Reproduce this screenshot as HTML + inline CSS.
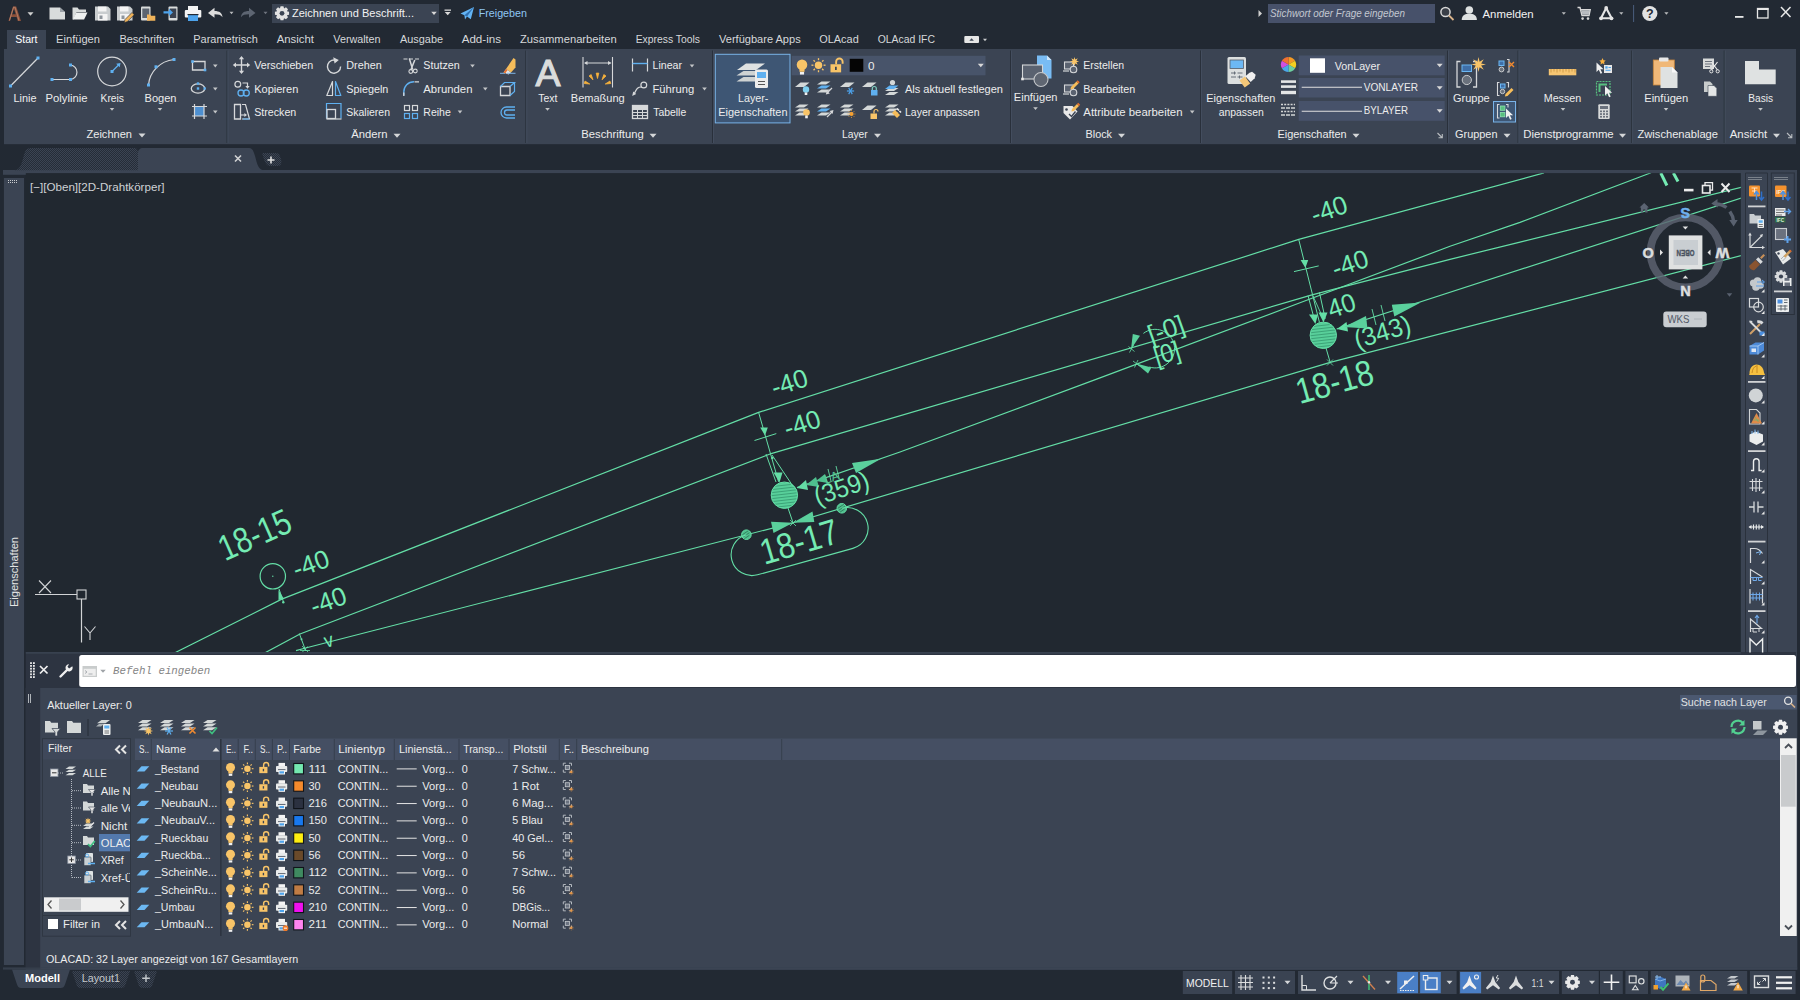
<!DOCTYPE html>
<html lang="de"><head><meta charset="utf-8"><title>AutoCAD</title>
<style>html,body{margin:0;padding:0;background:#222933;overflow:hidden}svg{display:block}text{font-family:"Liberation Sans",sans-serif;white-space:pre}</style>
</head><body>
<svg width="1800" height="1000" viewBox="0 0 1800 1000">
<defs><pattern id="chk" width="2" height="2" patternUnits="userSpaceOnUse"><rect width="2" height="2" fill="#252c37"/><rect width="1" height="1" fill="#3b4453"/><rect x="1" y="1" width="1" height="1" fill="#3b4453"/></pattern></defs>
<rect x="0.00" y="0.00" width="1800.00" height="1000.00" fill="#222933" />
<rect x="4.00" y="49.00" width="1792.00" height="95.20" fill="#3b4453" />
<rect x="7.00" y="30.00" width="39.00" height="20.00" fill="#3b4453" />
<rect x="3.00" y="170.00" width="1794.00" height="3.30" fill="#3b4453" />
<rect x="3.00" y="170.00" width="23.00" height="4.80" fill="#3b4453" />
<rect x="3.90" y="178.00" width="20.10" height="787.00" fill="#3b4453" />
<rect x="25.80" y="173.30" width="1715.00" height="478.70" fill="#212830" />
<rect x="1740.80" y="170.00" width="56.20" height="518.00" fill="#3b4453" />
<rect x="25.80" y="652.00" width="1771.20" height="36.00" fill="#2d3441" />
<rect x="25.80" y="652.00" width="1715.00" height="1.80" fill="#38414f" />
<rect x="1796.00" y="652.00" width="1.00" height="36.00" fill="#3b4453" />
<rect x="25.80" y="688.00" width="1771.50" height="281.70" fill="#3b4453" />
<rect x="25.80" y="688.00" width="14.40" height="280.20" fill="#2d3441" />
<rect x="3.00" y="967.40" width="1794.00" height="2.20" fill="#353e4b" />
<rect x="40.20" y="967.40" width="1757.00" height="2.20" fill="#3b4453" />
<path d="M8.5 21 L13 6.5 h3.2 L21 21 h-3.2 l-1.2-4 h-5.6 l-1.3 4z M12 14.3h3.7l-1.8-5.8z" fill="#8a4f3a" />
<path d="M9.5 20.5 L13.6 7.2 h1.4 L19 20.5" fill="none" stroke="#b07a62" stroke-width="1.1" />
<path d="M27.50 12.25h6l-3.00 3.5z" fill="#d0d0d0" />
<path d="M49.5 7.5h10.5l5 4.5v7.5h-15.5z" fill="#d9dcdc" />
<path d="M60 7.5v4.5h5z" fill="#9aa0a6" />
<path d="M72.5 19.5v-12h5l1.5 2h7v2.5h-9.5l-3 7.5z" fill="#d9dcdc" />
<path d="M72.8 19.5l3.4-7h11.3l-3.4 7z" fill="#eef0f0" />
<path d="M95 6.5h13l2.5 2.5v11.5h-15.5z" fill="#c9cdcf" />
<rect x="98.00" y="6.50" width="8.50" height="5.00" fill="#f4f4f4" />
<rect x="98.00" y="14.00" width="9.50" height="6.50" fill="#f4f4f4" />
<rect x="99.50" y="15.50" width="3.00" height="3.50" fill="#8d949b" />
<path d="M117 6.5h13l2.5 2.5v11.5h-15.5z" fill="#c9cdcf" />
<rect x="120.00" y="6.50" width="8.50" height="5.00" fill="#f4f4f4" />
<rect x="120.00" y="14.00" width="9.50" height="6.50" fill="#f4f4f4" />
<rect x="121.50" y="15.50" width="3.00" height="3.50" fill="#8d949b" />
<path d="M125 19.5l7-7 2.2 2.2-7 7-3 .8z" fill="#f0b35a" stroke="#222933" stroke-width="0.6" />
<rect x="141.00" y="6.50" width="9.50" height="14.00" fill="#d9dcdc" rx="1" />
<rect x="142.30" y="8.50" width="7.00" height="9.50" fill="#5c6470" />
<path d="M147 14.5h3l1 1.2h4.3v5h-8.3z" fill="#f0b35a" />
<rect x="168.50" y="6.50" width="9.00" height="14.00" fill="#d9dcdc" rx="1" />
<rect x="169.80" y="8.50" width="6.50" height="9.50" fill="#3a4250" />
<path d="M163.5 11.2h5.5v-2.4l4 3.6-4 3.6v-2.4h-5.5z" fill="#4da3ec" />
<rect x="188.00" y="6.00" width="10.00" height="4.50" fill="#f4f4f4" />
<rect x="184.80" y="10.00" width="16.50" height="7.50" fill="#f4f4f4" rx="1" />
<rect x="188.00" y="14.50" width="10.00" height="6.50" fill="#4da3ec" />
<rect x="187.50" y="14.00" width="11.00" height="1.20" fill="#222933" />
<path d="M208 13l6.5-5.2v3.2c5 0 7.8 2 8 6.3-1.6-2.4-4-3-8-3v3.5z" fill="#dcdcdc" />
<path d="M229.50 11.75h4l-2.00 2.5z" fill="#b8babc" />
<path d="M255.5 13l-6.5-5.2v3.2c-5 0-7.8 2-8 6.3 1.6-2.4 4-3 8-3v3.5z" fill="#5d6572" />
<path d="M263.50 11.75h4l-2.00 2.5z" fill="#70767f" />
<rect x="272.00" y="4.00" width="167.00" height="19.00" fill="#3b4453" />
<path d="M289.06 11.87 L289.06 14.73 L286.93 15.33 L286.92 15.35 L288.00 17.28 L285.98 19.30 L284.05 18.22 L284.03 18.23 L283.43 20.36 L280.57 20.36 L279.97 18.23 L279.95 18.22 L278.02 19.30 L276.00 17.28 L277.08 15.35 L277.07 15.33 L274.94 14.73 L274.94 11.87 L277.07 11.27 L277.08 11.25 L276.00 9.32 L278.02 7.30 L279.95 8.38 L279.97 8.37 L280.57 6.24 L283.43 6.24 L284.03 8.37 L284.05 8.38 L285.98 7.30 L288.00 9.32 L286.92 11.25 L286.93 11.27z" fill="#e2e2e2" />
<circle cx="282.00" cy="13.30" r="2.38" fill="#3b4453" />
<text x="292.00" y="17.30" font-size="11.8" fill="#f2f2f2" textLength="122.00" lengthAdjust="spacingAndGlyphs" >Zeichnen und Beschrift...</text>
<path d="M431.25 11.70h5.5l-2.75 3.2z" fill="#d8d8d8" />
<rect x="444.50" y="9.50" width="6.50" height="1.30" fill="#d8d8d8" />
<path d="M444.70 11.90h6l-3.00 3.4z" fill="#d8d8d8" />
<path d="M460.5 13.5L474 7l-3.2 12.2-3.8-2.6-2 2.9-.6-4.3z" fill="#63b4f4" />
<path d="M464.4 15.2L474 7l-7 9.6" fill="#2f6fb0" />
<text x="478.70" y="17.30" font-size="11.8" fill="#8fc6f4" textLength="48.30" lengthAdjust="spacingAndGlyphs" >Freigeben</text>
<path d="M1258.5 10l3.5 3.5-3.5 3.5z" fill="#d0d0d0" />
<rect x="1268.00" y="4.00" width="167.00" height="19.00" fill="#47516a" />
<text x="1270.00" y="17.20" font-size="11.3" fill="#c3c8d0" font-style="italic" textLength="135.00" lengthAdjust="spacingAndGlyphs" >Stichwort oder Frage eingeben</text>
<circle cx="1445.50" cy="12.00" r="4.60" fill="#3a3f48" stroke="#d8d8d8" stroke-width="1.5" />
<line x1="1449.00" y1="15.50" x2="1453.50" y2="20.00" stroke="#d9b38a" stroke-width="1.8" />
<circle cx="1469.30" cy="10.00" r="3.80" fill="#dfe2e2" />
<path d="M1461.7 20c0-4.5 3-6.3 7.6-6.3s7.6 1.8 7.6 6.3z" fill="#dfe2e2" />
<text x="1482.50" y="17.50" font-size="11.8" fill="#f2f2f2" textLength="51.20" lengthAdjust="spacingAndGlyphs" >Anmelden</text>
<path d="M1561.70 12.20h4.2l-2.10 2.6z" fill="#b8babc" />
<path d="M1577.5 7.5h2.5l2 8h7l1.2-5.8h-9" fill="none" stroke="#d8d8d8" stroke-width="1.4" />
<circle cx="1582.60" cy="18.60" r="1.30" fill="#d8d8d8" />
<circle cx="1588.00" cy="18.60" r="1.30" fill="#d8d8d8" />
<path d="M1581.3 10.2h8.4l-1 4.6h-6.3z" fill="#b9bcc0" />
<path d="M1606.2 8l-5.2 10.3h10.6z" fill="none" stroke="#e4e4e4" stroke-width="2.1" stroke-linejoin="round"/>
<circle cx="1606.20" cy="8.00" r="1.90" fill="#e4e4e4" />
<circle cx="1601.00" cy="18.30" r="1.90" fill="#e4e4e4" />
<circle cx="1611.50" cy="18.30" r="1.90" fill="#e4e4e4" />
<path d="M1619.20 12.20h4.2l-2.10 2.6z" fill="#b8babc" />
<line x1="1633.60" y1="5.00" x2="1633.60" y2="22.00" stroke="#4a5d7e" stroke-width="1" />
<circle cx="1649.80" cy="13.50" r="7.60" fill="#e2e2e2" />
<text x="1649.80" y="18.20" font-size="12.5" fill="#222933" text-anchor="middle" font-weight="bold" >?</text>
<path d="M1664.30 12.20h4.2l-2.10 2.6z" fill="#b8babc" />
<rect x="1735.00" y="16.00" width="8.50" height="1.80" fill="#e8e8e8" />
<rect x="1757.50" y="8.50" width="10.50" height="9.50" fill="none" stroke="#e8e8e8" stroke-width="1.3" />
<rect x="1757.00" y="8.00" width="11.50" height="2.00" fill="#e8e8e8" />
<line x1="1781.00" y1="7.00" x2="1790.50" y2="17.00" stroke="#e8e8e8" stroke-width="1.5" />
<line x1="1790.50" y1="7.00" x2="1781.00" y2="17.00" stroke="#e8e8e8" stroke-width="1.5" />
<text x="15.30" y="43.20" font-size="11.7" fill="#ffffff" textLength="22.20" lengthAdjust="spacingAndGlyphs" >Start</text>
<text x="56.10" y="43.20" font-size="11.7" fill="#d6d8da" textLength="43.90" lengthAdjust="spacingAndGlyphs" >Einfügen</text>
<text x="119.40" y="43.20" font-size="11.7" fill="#d6d8da" textLength="55.00" lengthAdjust="spacingAndGlyphs" >Beschriften</text>
<text x="193.30" y="43.20" font-size="11.7" fill="#d6d8da" textLength="64.50" lengthAdjust="spacingAndGlyphs" >Parametrisch</text>
<text x="276.70" y="43.20" font-size="11.7" fill="#d6d8da" textLength="37.20" lengthAdjust="spacingAndGlyphs" >Ansicht</text>
<text x="333.30" y="43.20" font-size="11.7" fill="#d6d8da" textLength="47.30" lengthAdjust="spacingAndGlyphs" >Verwalten</text>
<text x="400.00" y="43.20" font-size="11.7" fill="#d6d8da" textLength="43.00" lengthAdjust="spacingAndGlyphs" >Ausgabe</text>
<text x="461.70" y="43.20" font-size="11.7" fill="#d6d8da" textLength="39.30" lengthAdjust="spacingAndGlyphs" >Add-ins</text>
<text x="520.00" y="43.20" font-size="11.7" fill="#d6d8da" textLength="96.70" lengthAdjust="spacingAndGlyphs" >Zusammenarbeiten</text>
<text x="635.70" y="43.20" font-size="11.7" fill="#d6d8da" textLength="64.30" lengthAdjust="spacingAndGlyphs" >Express Tools</text>
<text x="719.00" y="43.20" font-size="11.7" fill="#d6d8da" textLength="81.70" lengthAdjust="spacingAndGlyphs" >Verfügbare Apps</text>
<text x="819.30" y="43.20" font-size="11.7" fill="#d6d8da" textLength="39.40" lengthAdjust="spacingAndGlyphs" >OLAcad</text>
<text x="877.70" y="43.20" font-size="11.7" fill="#d6d8da" textLength="57.30" lengthAdjust="spacingAndGlyphs" >OLAcad IFC</text>
<rect x="964.30" y="36.00" width="14.70" height="7.00" fill="#e6e6e6" rx="1" />
<path d="M969.35 40.80h4.5l-2.25 -2.6z" fill="#3b4453" />
<path d="M983.00 38.75h4l-2.00 2.5z" fill="#c8cacc" />
<line x1="227.00" y1="50.50" x2="227.00" y2="143.00" stroke="#29303b" stroke-width="1" />
<line x1="228.00" y1="50.50" x2="228.00" y2="143.00" stroke="#434d5e" stroke-width="1" />
<line x1="525.80" y1="50.50" x2="525.80" y2="143.00" stroke="#29303b" stroke-width="1" />
<line x1="526.80" y1="50.50" x2="526.80" y2="143.00" stroke="#434d5e" stroke-width="1" />
<line x1="712.50" y1="50.50" x2="712.50" y2="143.00" stroke="#29303b" stroke-width="1" />
<line x1="713.50" y1="50.50" x2="713.50" y2="143.00" stroke="#434d5e" stroke-width="1" />
<line x1="1010.50" y1="50.50" x2="1010.50" y2="143.00" stroke="#29303b" stroke-width="1" />
<line x1="1011.50" y1="50.50" x2="1011.50" y2="143.00" stroke="#434d5e" stroke-width="1" />
<line x1="1200.50" y1="50.50" x2="1200.50" y2="143.00" stroke="#29303b" stroke-width="1" />
<line x1="1201.50" y1="50.50" x2="1201.50" y2="143.00" stroke="#434d5e" stroke-width="1" />
<line x1="1447.50" y1="50.50" x2="1447.50" y2="143.00" stroke="#29303b" stroke-width="1" />
<line x1="1448.50" y1="50.50" x2="1448.50" y2="143.00" stroke="#434d5e" stroke-width="1" />
<line x1="1518.00" y1="50.50" x2="1518.00" y2="143.00" stroke="#29303b" stroke-width="1" />
<line x1="1519.00" y1="50.50" x2="1519.00" y2="143.00" stroke="#434d5e" stroke-width="1" />
<line x1="1631.70" y1="50.50" x2="1631.70" y2="143.00" stroke="#29303b" stroke-width="1" />
<line x1="1632.70" y1="50.50" x2="1632.70" y2="143.00" stroke="#434d5e" stroke-width="1" />
<line x1="1724.20" y1="50.50" x2="1724.20" y2="143.00" stroke="#29303b" stroke-width="1" />
<line x1="1725.20" y1="50.50" x2="1725.20" y2="143.00" stroke="#434d5e" stroke-width="1" />
<line x1="10.50" y1="86.00" x2="38.00" y2="58.00" stroke="#d6d8da" stroke-width="1.2" />
<rect x="9.00" y="84.50" width="3.00" height="3.00" fill="#5fb0f0" />
<rect x="36.50" y="56.50" width="3.00" height="3.00" fill="#5fb0f0" />
<path d="M52 79.5H70.5A7.3 7.3 0 0 0 70.5 65" fill="none" stroke="#d6d8da" stroke-width="1.2" />
<rect x="50.50" y="78.00" width="3.00" height="3.00" fill="#5fb0f0" />
<rect x="69.00" y="78.00" width="3.00" height="3.00" fill="#5fb0f0" />
<rect x="69.00" y="63.50" width="3.00" height="3.00" fill="#5fb0f0" />
<circle cx="112.00" cy="71.50" r="14.30" fill="none" stroke="#d6d8da" stroke-width="1.2" />
<line x1="112.00" y1="71.50" x2="119.00" y2="64.50" stroke="#5fb0f0" stroke-width="1.2" />
<path d="M120.5 63l-4.3.8 3.5 3.5z" fill="#5fb0f0" />
<rect x="110.50" y="70.00" width="3.00" height="3.00" fill="#5fb0f0" />
<path d="M148.5 85C149.5 72 160 61 174 59.5" fill="none" stroke="#d6d8da" stroke-width="1.2" />
<rect x="147.00" y="83.50" width="3.00" height="3.00" fill="#5fb0f0" />
<rect x="154.50" y="65.30" width="3.00" height="3.00" fill="#5fb0f0" />
<rect x="172.50" y="58.00" width="3.00" height="3.00" fill="#5fb0f0" />
<text x="13.50" y="101.60" font-size="11.7" fill="#ececec" textLength="23.00" lengthAdjust="spacingAndGlyphs" >Linie</text>
<text x="45.50" y="101.60" font-size="11.7" fill="#ececec" textLength="42.00" lengthAdjust="spacingAndGlyphs" >Polylinie</text>
<text x="100.50" y="101.60" font-size="11.7" fill="#ececec" textLength="23.50" lengthAdjust="spacingAndGlyphs" >Kreis</text>
<text x="144.50" y="101.60" font-size="11.7" fill="#ececec" textLength="32.00" lengthAdjust="spacingAndGlyphs" >Bogen</text>
<path d="M109.70 107.90h4.6l-2.30 2.8z" fill="#c4c6c8" />
<path d="M157.70 107.90h4.6l-2.30 2.8z" fill="#c4c6c8" />
<path d="M192.5 61.5h12.5v8.5h-12.5z" fill="none" stroke="#d6d8da" stroke-width="1.3" />
<rect x="191.20" y="60.20" width="2.60" height="2.60" fill="#5fb0f0" />
<rect x="203.70" y="68.70" width="2.60" height="2.60" fill="#5fb0f0" />
<path d="M213.00 64.60h4.6l-2.30 2.8z" fill="#c4c6c8" />
<ellipse cx="198" cy="88.5" rx="6.7" ry="4.6" fill="none" stroke="#d6d8da" stroke-width="1.3"/>
<rect x="196.80" y="87.30" width="2.40" height="2.40" fill="#5fb0f0" />
<rect x="196.80" y="82.30" width="2.40" height="2.40" fill="#5fb0f0" />
<rect x="203.50" y="87.30" width="2.40" height="2.40" fill="#5fb0f0" />
<path d="M213.00 87.60h4.6l-2.30 2.8z" fill="#c4c6c8" />
<rect x="194.50" y="106.50" width="9.50" height="9.50" fill="#4d8fd0" />
<path d="M192 106.5h15M192 116h15M194.5 104v15M204 104v15" fill="none" stroke="#d6d8da" stroke-width="1.2" />
<path d="M213.00 110.60h4.6l-2.30 2.8z" fill="#c4c6c8" />
<text x="86.50" y="138.30" font-size="11.7" fill="#ececec" textLength="45.50" lengthAdjust="spacingAndGlyphs" >Zeichnen</text>
<path d="M138.50 133.60h7l-3.50 4z" fill="#d4d6d8" />
<path d="M241.5 57.5v15M234 65h15" fill="none" stroke="#d6d8da" stroke-width="1.4" />
<path d="M241.5 56l2.6 3.2h-5.2zM241.5 74l2.6-3.2h-5.2zM232.8 65l3.2-2.6v5.2zM250.2 65l-3.2-2.6v5.2z" fill="#d6d8da" />
<text x="254.20" y="69.30" font-size="11.7" fill="#ececec" textLength="59.10" lengthAdjust="spacingAndGlyphs" >Verschieben</text>
<circle cx="237.80" cy="84.30" r="2.90" fill="none" stroke="#d6d8da" stroke-width="1.2" />
<path d="M242.5 83h5v3.5" fill="none" stroke="#d6d8da" stroke-width="1.2" />
<path d="M247.5 88.8l-2.2-2.8h4.4z" fill="#d6d8da" />
<circle cx="241.00" cy="93.00" r="3.00" fill="none" stroke="#5fb0f0" stroke-width="1.3" />
<circle cx="246.30" cy="93.00" r="3.00" fill="none" stroke="#5fb0f0" stroke-width="1.3" />
<text x="254.20" y="92.50" font-size="11.7" fill="#ececec" textLength="44.10" lengthAdjust="spacingAndGlyphs" >Kopieren</text>
<path d="M234.5 104.5h6v14.5h-6z" fill="none" stroke="#d6d8da" stroke-width="1.3" />
<path d="M242 104.5h3.5l4 14.5h-7.5" fill="none" stroke="#d6d8da" stroke-width="1.2" />
<path d="M240.5 115h5" fill="none" stroke="#d6d8da" stroke-width="1.1" />
<path d="M247 115l-2.6-1.9v3.8z" fill="#d6d8da" />
<path d="M243 119h6.5" fill="none" stroke="#5fb0f0" stroke-width="1.1" />
<text x="254.20" y="115.60" font-size="11.7" fill="#ececec" textLength="42.10" lengthAdjust="spacingAndGlyphs" >Strecken</text>
<path d="M337.2 60.8A6.6 6.6 0 1 0 340.6 66.5" fill="none" stroke="#d6d8da" stroke-width="1.4" />
<path d="M333.2 57.3l5.6 2.6-4.2 3.6z" fill="#d6d8da" />
<text x="346.30" y="69.30" font-size="11.7" fill="#ececec" textLength="35.40" lengthAdjust="spacingAndGlyphs" >Drehen</text>
<path d="M332.5 81.5v14l-5.7 0z" fill="none" stroke="#d6d8da" stroke-width="1.2" stroke-linejoin="round"/>
<path d="M335.5 81.5v14l5.3 0z" fill="none" stroke="#5fb0f0" stroke-width="1.2" stroke-linejoin="round"/>
<text x="346.30" y="92.50" font-size="11.7" fill="#ececec" textLength="42.00" lengthAdjust="spacingAndGlyphs" >Spiegeln</text>
<path d="M326.5 118.5v-15h14.5v15" fill="none" stroke="#5fb0f0" stroke-width="1.2" />
<rect x="327.00" y="109.50" width="8.50" height="9.00" fill="none" stroke="#d6d8da" stroke-width="1.3" />
<path d="M326.5 119h15" fill="none" stroke="#d6d8da" stroke-width="1.2" />
<text x="346.30" y="115.60" font-size="11.7" fill="#ececec" textLength="43.70" lengthAdjust="spacingAndGlyphs" >Skalieren</text>
<path d="M403.5 59h4M409 59h4M415 59h4" fill="none" stroke="#d6d8da" stroke-width="1.2" />
<path d="M409.3 58.5l3.4 11M414.8 60l-4 10" fill="none" stroke="#d6d8da" stroke-width="1.5" />
<circle cx="410.80" cy="71.50" r="1.90" fill="none" stroke="#d6d8da" stroke-width="1.1" />
<circle cx="415.30" cy="71.00" r="1.90" fill="none" stroke="#d6d8da" stroke-width="1.1" />
<text x="423.30" y="69.30" font-size="11.7" fill="#ececec" textLength="36.40" lengthAdjust="spacingAndGlyphs" >Stutzen</text>
<path d="M470.20 64.60h4.6l-2.30 2.8z" fill="#c4c6c8" />
<path d="M403.8 95.5V92C403.8 86 408 81.8 414 81.8" fill="none" stroke="#5fb0f0" stroke-width="1.4" />
<path d="M414.5 81.8h4.5M403.8 92.5v3.5" fill="none" stroke="#d6d8da" stroke-width="1.3" />
<text x="423.30" y="92.50" font-size="11.7" fill="#ececec" textLength="49.20" lengthAdjust="spacingAndGlyphs" >Abrunden</text>
<path d="M483.00 87.60h4.6l-2.30 2.8z" fill="#c4c6c8" />
<rect x="404.50" y="105.50" width="5.00" height="5.00" fill="none" stroke="#d6d8da" stroke-width="1.2" />
<rect x="412.50" y="105.50" width="5.00" height="5.00" fill="none" stroke="#d6d8da" stroke-width="1.2" />
<rect x="404.50" y="113.50" width="5.00" height="5.00" fill="none" stroke="#5fb0f0" stroke-width="1.2" />
<rect x="412.50" y="113.50" width="5.00" height="5.00" fill="none" stroke="#5fb0f0" stroke-width="1.2" />
<text x="423.30" y="115.60" font-size="11.7" fill="#ececec" textLength="27.50" lengthAdjust="spacingAndGlyphs" >Reihe</text>
<path d="M457.70 110.60h4.6l-2.30 2.8z" fill="#c4c6c8" />
<path d="M506 69l7.5-11 2 1.5v8l-4.5 5z" fill="#f6bd5a" />
<path d="M503.5 72.5l2.5-3.5 5 3.5-2.5 2z" fill="#e8e8e8" />
<path d="M500 73.3h5M507 73.3h8.5" fill="none" stroke="#7fb4e4" stroke-width="1" />
<path d="M503.5 72.5l2.5-3.5 1.6 1.1-2.5 3.5z" fill="#e8702a" />
<path d="M500.5 86.5h9.5v9h-9.5z" fill="none" stroke="#d6d8da" stroke-width="1.3" />
<path d="M500.5 86.5l4-4h10l-4.5 4M514.5 82.5v9l-4.5 4" fill="none" stroke="#5fb0f0" stroke-width="1.2" />
<path d="M515 107h-8.5a5.5 5.5 0 0 0 0 11h8.5" fill="none" stroke="#5fb0f0" stroke-width="1.3" />
<path d="M515 110h-8a2.5 2.5 0 0 0 0 5h8" fill="none" stroke="#5fb0f0" stroke-width="1.3" />
<text x="351.30" y="138.30" font-size="11.7" fill="#ececec" textLength="36.20" lengthAdjust="spacingAndGlyphs" >Ändern</text>
<path d="M393.50 133.70h7l-3.50 4z" fill="#d4d6d8" />
<text x="535.40" y="85.80" font-size="37.5" fill="#dadcdc" textLength="25.00" lengthAdjust="spacingAndGlyphs" stroke="#dadcdc" stroke-width="1.1">A</text>
<text x="538.30" y="101.60" font-size="11.7" fill="#ececec" textLength="19.20" lengthAdjust="spacingAndGlyphs" >Text</text>
<path d="M545.20 107.90h4.6l-2.30 2.8z" fill="#c4c6c8" />
<path d="M583 57v30.5M612.5 57v30.5" fill="none" stroke="#d6d8da" stroke-width="1.1" />
<path d="M585 63h25.5" fill="none" stroke="#d6d8da" stroke-width="1" />
<path d="M584 63l3.5-2v4zM611.5 63l-3.5-2v4z" fill="#d6d8da" />
<path d="M597.50 78.50L596.20 73.10L598.80 73.10z" fill="#f6b13c" stroke="#f6b13c" stroke-width="0.8" />
<path d="M601.97 79.82L603.82 74.59L606.00 76.00z" fill="#f6b13c" stroke="#f6b13c" stroke-width="0.8" />
<path d="M593.03 79.82L589.00 76.00L591.18 74.59z" fill="#f6b13c" stroke="#f6b13c" stroke-width="0.8" />
<path d="M605.25 84.03L609.94 81.04L610.78 83.50z" fill="#f6b13c" stroke="#f6b13c" stroke-width="0.8" />
<path d="M589.75 84.03L584.22 83.50L585.06 81.04z" fill="#f6b13c" stroke="#f6b13c" stroke-width="0.8" />
<text x="570.80" y="101.60" font-size="11.7" fill="#ececec" textLength="53.90" lengthAdjust="spacingAndGlyphs" >Bemaßung</text>
<path d="M632.5 58.5v13M647.5 58.5v13" fill="none" stroke="#d6d8da" stroke-width="1.2" />
<path d="M632.5 63.5h15" fill="none" stroke="#5fb0f0" stroke-width="1.4" />
<text x="652.50" y="69.30" font-size="11.7" fill="#ececec" textLength="29.50" lengthAdjust="spacingAndGlyphs" >Linear</text>
<path d="M689.70 64.60h4.6l-2.30 2.8z" fill="#c4c6c8" />
<circle cx="643.80" cy="85.00" r="2.90" fill="none" stroke="#d6d8da" stroke-width="1.2" />
<path d="M641.5 87c-5 0-5 3-7.5 7" fill="none" stroke="#d6d8da" stroke-width="1.2" />
<path d="M632.2 96l1-4.5 3 2.4z" fill="#d6d8da" />
<text x="652.50" y="92.50" font-size="11.7" fill="#ececec" textLength="41.70" lengthAdjust="spacingAndGlyphs" >Führung</text>
<path d="M702.20 87.60h4.6l-2.30 2.8z" fill="#c4c6c8" />
<rect x="632.50" y="105.50" width="15.00" height="13.00" fill="none" stroke="#d6d8da" stroke-width="1.3" />
<path d="M632.5 109.5h15M632.5 112.5h15M632.5 115.5h15M637.5 109.5v9M642.5 109.5v9" fill="none" stroke="#d6d8da" stroke-width="1" />
<rect x="632.50" y="105.50" width="15.00" height="3.50" fill="#d6d8da" />
<text x="653.30" y="115.60" font-size="11.7" fill="#ececec" textLength="32.90" lengthAdjust="spacingAndGlyphs" >Tabelle</text>
<text x="581.30" y="138.30" font-size="11.7" fill="#ececec" textLength="62.40" lengthAdjust="spacingAndGlyphs" >Beschriftung</text>
<path d="M649.50 133.70h7l-3.50 4z" fill="#d4d6d8" />
<rect x="715.30" y="54.30" width="74.70" height="68.60" fill="#3e5674" stroke="#79b3e8" stroke-width="1" />
<path d="M737 70.0l9 -6.5h19l-9 6.5z" fill="#dfe2e2" />
<path d="M736.5 75.5l7 -4.5h19l-7 4.5z" fill="#cfd3d3" />
<path d="M736.5 81.5l7 -4.5h19l-7 4.5z" fill="#cfd3d3" />
<rect x="755.00" y="69.50" width="13.00" height="18.50" fill="#ececec" rx="1.5" />
<rect x="757.00" y="72.00" width="9.00" height="6.00" fill="#5fb0f0" />
<path d="M758 81.5h7M758 84.5h7" fill="none" stroke="#555" stroke-width="1" />
<text x="738.00" y="102.00" font-size="11.7" fill="#ececec" textLength="30.30" lengthAdjust="spacingAndGlyphs" >Layer-</text>
<text x="718.30" y="116.30" font-size="11.7" fill="#ececec" textLength="69.20" lengthAdjust="spacingAndGlyphs" >Eigenschaften</text>
<rect x="791.70" y="55.80" width="193.80" height="19.50" fill="#48546a" />
<circle cx="802.00" cy="64.78" r="5.29" fill="#f8c468" />
<rect x="799.47" y="69.03" width="5.06" height="2.76" fill="#f8c468" />
<rect x="799.93" y="72.02" width="4.14" height="2.53" fill="#f2f2f2" />
<circle cx="818.50" cy="65.20" r="3.74" fill="#f8c468" />
<line x1="823.56" y1="65.20" x2="825.54" y2="65.20" stroke="#f8c468" stroke-width="1.32" />
<line x1="822.08" y1="68.78" x2="823.48" y2="70.18" stroke="#f8c468" stroke-width="1.32" />
<line x1="818.50" y1="70.26" x2="818.50" y2="72.24" stroke="#f8c468" stroke-width="1.32" />
<line x1="814.92" y1="68.78" x2="813.52" y2="70.18" stroke="#f8c468" stroke-width="1.32" />
<line x1="813.44" y1="65.20" x2="811.46" y2="65.20" stroke="#f8c468" stroke-width="1.32" />
<line x1="814.92" y1="61.62" x2="813.52" y2="60.22" stroke="#f8c468" stroke-width="1.32" />
<line x1="818.50" y1="60.14" x2="818.50" y2="58.16" stroke="#f8c468" stroke-width="1.32" />
<line x1="822.08" y1="61.62" x2="823.48" y2="60.22" stroke="#f8c468" stroke-width="1.32" />
<rect x="830.50" y="64.25" width="10.62" height="8.12" fill="#f8c468" />
<path d="M836.125 64.25v-2.5a3.25 3.25 0 0 1 6.5 0v1.875" fill="none" stroke="#f8c468" stroke-width="1.875" />
<rect x="835.00" y="66.75" width="1.75" height="3.25" fill="#3b4453" />
<rect x="849.70" y="58.80" width="13.60" height="13.00" fill="#050505" />
<text x="868.00" y="70.00" font-size="11.7" fill="#ececec" >0</text>
<path d="M977.80 63.80h6l-3.00 3.4z" fill="#d8d8d8" />
<path d="M795 87.0l5.5 -4.5h9l-5.5 4.5z" fill="#d4d8d8" />
<circle cx="806.00" cy="89.50" r="3.20" fill="#7fd0f0" />
<rect x="804.70" y="92.50" width="2.60" height="2.50" fill="#f0f0f0" />
<path d="M817 84.5l4.5 -3h9l-4.5 3z" fill="#d4d8d8" />
<path d="M817 88.5l4.5 -3h9l-4.5 3z" fill="#5fb0f0" />
<path d="M817 92.5l4.5 -3h9l-4.5 3z" fill="#d4d8d8" />
<path d="M832 88l-5 5" fill="none" stroke="#d6d8da" stroke-width="1.3" />
<path d="M825.8 94.5l1-4 3 3z" fill="#d6d8da" />
<path d="M840 87.0l5.5 -4.5h9l-5.5 4.5z" fill="#d4d8d8" />
<line x1="846.90" y1="91.00" x2="854.10" y2="91.00" stroke="#4da3ec" stroke-width="1.2" />
<line x1="848.70" y1="87.88" x2="852.30" y2="94.12" stroke="#4da3ec" stroke-width="1.2" />
<line x1="852.30" y1="87.88" x2="848.70" y2="94.12" stroke="#4da3ec" stroke-width="1.2" />
<path d="M862 87.0l5.5 -4.5h9l-5.5 4.5z" fill="#d4d8d8" />
<rect x="871.00" y="90.00" width="6.50" height="5.50" fill="#5fb0f0" />
<path d="M872.3 90v-1.5a2 2 0 0 1 4 0v1.5" fill="none" stroke="#7fd0c0" stroke-width="1.2" />
<path d="M885 91l4.5 -3h9l-4.5 3z" fill="#d4d8d8" />
<path d="M885 95l4.5 -3h9l-4.5 3z" fill="#d4d8d8" />
<path d="M885 89.0l4.5 -3.5h9l-4.5 3.5z" fill="#5fb0f0" />
<circle cx="892.50" cy="82.50" r="2.60" fill="#d4d8d8" />
<text x="905.00" y="92.50" font-size="11.7" fill="#ececec" textLength="98.00" lengthAdjust="spacingAndGlyphs" >Als aktuell festlegen</text>
<path d="M795 107.5l4.5 -3h9l-4.5 3z" fill="#d4d8d8" />
<path d="M795 111.5l4.5 -3h9l-4.5 3z" fill="#d4d8d8" />
<path d="M795 115.5l4.5 -3h9l-4.5 3z" fill="#d4d8d8" />
<circle cx="806.50" cy="112.50" r="3.30" fill="#f8c468" />
<rect x="805.20" y="115.50" width="2.60" height="2.80" fill="#f0f0f0" />
<path d="M817 107.5l4.5 -3h9l-4.5 3z" fill="#d4d8d8" />
<path d="M817 111.5l4.5 -3h9l-4.5 3z" fill="#5fb0f0" />
<path d="M817 115.5l4.5 -3h9l-4.5 3z" fill="#d4d8d8" />
<path d="M827 117l5.5-5.5" fill="none" stroke="#d6d8da" stroke-width="1.3" />
<path d="M833.5 110l-1 4-3-3z" fill="#d6d8da" />
<path d="M840 107.5l4.5 -3h9l-4.5 3z" fill="#d4d8d8" />
<path d="M840 111.5l4.5 -3h9l-4.5 3z" fill="#d4d8d8" />
<path d="M840 115.5l4.5 -3h9l-4.5 3z" fill="#d4d8d8" />
<circle cx="851.50" cy="114.00" r="2.11" fill="#f6a030" />
<line x1="854.35" y1="114.00" x2="855.47" y2="114.00" stroke="#f6a030" stroke-width="0.744" />
<line x1="853.52" y1="116.02" x2="854.31" y2="116.81" stroke="#f6a030" stroke-width="0.744" />
<line x1="851.50" y1="116.85" x2="851.50" y2="117.97" stroke="#f6a030" stroke-width="0.744" />
<line x1="849.48" y1="116.02" x2="848.69" y2="116.81" stroke="#f6a030" stroke-width="0.744" />
<line x1="848.65" y1="114.00" x2="847.53" y2="114.00" stroke="#f6a030" stroke-width="0.744" />
<line x1="849.48" y1="111.98" x2="848.69" y2="111.19" stroke="#f6a030" stroke-width="0.744" />
<line x1="851.50" y1="111.15" x2="851.50" y2="110.03" stroke="#f6a030" stroke-width="0.744" />
<line x1="853.52" y1="111.98" x2="854.31" y2="111.19" stroke="#f6a030" stroke-width="0.744" />
<path d="M862 110.0l5.5 -4.5h9l-5.5 4.5z" fill="#d4d8d8" />
<rect x="870.50" y="113.50" width="6.50" height="5.50" fill="#f8c468" />
<path d="M874 113.5v-2a2 2 0 0 1 4 0" fill="none" stroke="#f8c468" stroke-width="1.2" />
<path d="M885 107.5l4.5 -3h9l-4.5 3z" fill="#d4d8d8" />
<path d="M885 111.5l4.5 -3h9l-4.5 3z" fill="#d4d8d8" />
<path d="M885 115.5l4.5 -3h9l-4.5 3z" fill="#d4d8d8" />
<path d="M892 113l3-3 5 5-3 3z" fill="#f6bd5a" />
<path d="M897 108.5l2 2M899.5 111l1.5 1.5" fill="none" stroke="#f0f0f0" stroke-width="1.6" />
<text x="905.00" y="115.60" font-size="11.7" fill="#ececec" textLength="74.50" lengthAdjust="spacingAndGlyphs" >Layer anpassen</text>
<text x="842.00" y="138.30" font-size="11.7" fill="#ececec" textLength="25.80" lengthAdjust="spacingAndGlyphs" >Layer</text>
<path d="M874.00 133.70h7l-3.50 4z" fill="#d4d6d8" />
<path d="M1037 55.5h10l4.5 4.5v18.5h-14.5z" fill="#79bcf4" />
<path d="M1047 55.5v4.5h4.5z" fill="#cfe6fa" />
<rect x="1022.50" y="65.00" width="20.00" height="14.00" fill="#5a6270" stroke="#d4d6d8" stroke-width="1.1" />
<circle cx="1041.00" cy="79.50" r="7.00" fill="#5f6672" stroke="#c4c7ca" stroke-width="1.1" />
<rect x="1021.20" y="77.70" width="2.60" height="2.60" fill="#e8e8e8" />
<text x="1013.80" y="101.00" font-size="11.7" fill="#ececec" textLength="43.70" lengthAdjust="spacingAndGlyphs" >Einfügen</text>
<path d="M1033.20 107.20h4.6l-2.30 2.8z" fill="#c4c6c8" />
<rect x="1064.50" y="62.00" width="9.00" height="7.00" fill="#5a6270" stroke="#d6d8da" stroke-width="1.1" />
<path d="M1063 71.0h6" fill="none" stroke="#d6d8da" stroke-width="1.2" />
<circle cx="1073.50" cy="69.50" r="3.30" fill="#5a6270" stroke="#d6d8da" stroke-width="1.1" />
<path d="M1074.50 56.90L1075.29 59.59L1077.75 58.25L1076.41 60.71L1079.10 61.50L1076.41 62.29L1077.75 64.75L1075.29 63.41L1074.50 66.10L1073.71 63.41L1071.25 64.75L1072.59 62.29L1069.90 61.50L1072.59 60.71L1071.25 58.25L1073.71 59.59z" fill="#f8c468" />
<text x="1083.30" y="69.30" font-size="11.7" fill="#ececec" textLength="40.90" lengthAdjust="spacingAndGlyphs" >Erstellen</text>
<rect x="1064.50" y="85.00" width="9.00" height="7.00" fill="#5a6270" stroke="#d6d8da" stroke-width="1.1" />
<path d="M1063 94.0h6" fill="none" stroke="#d6d8da" stroke-width="1.2" />
<circle cx="1073.50" cy="92.50" r="3.30" fill="#5a6270" stroke="#d6d8da" stroke-width="1.1" />
<path d="M1071 87l5.5-5.5 2 2-5.5 5.5-2.6.6z" fill="#f6bd5a" />
<path d="M1076.5 81.5l1.2-1.2 2 2-1.2 1.2z" fill="#e8702a" />
<text x="1083.30" y="92.50" font-size="11.7" fill="#ececec" textLength="52.00" lengthAdjust="spacingAndGlyphs" >Bearbeiten</text>
<path d="M1063.5 106h9l5 5.5-7.5 8-6.5-6.5z" fill="#e8e8e8" />
<circle cx="1066.50" cy="109.50" r="1.30" fill="#3b4453" />
<path d="M1069 114l2.5 2.5 4-5" fill="none" stroke="#3b4453" stroke-width="1.3" />
<path d="M1072 109l5-5 2 2-5 5-2.6.6z" fill="#f6bd5a" />
<path d="M1077 104l1.2-1.2 2 2-1.2 1.2z" fill="#e8702a" />
<text x="1083.30" y="115.60" font-size="11.7" fill="#ececec" textLength="99.20" lengthAdjust="spacingAndGlyphs" >Attribute bearbeiten</text>
<path d="M1189.90 110.60h4.6l-2.30 2.8z" fill="#c4c6c8" />
<text x="1085.50" y="138.30" font-size="11.7" fill="#ececec" textLength="26.50" lengthAdjust="spacingAndGlyphs" >Block</text>
<path d="M1118.00 133.70h7l-3.50 4z" fill="#d4d6d8" />
<rect x="1227.50" y="57.00" width="18.50" height="27.00" fill="#dcdfdf" rx="1.5" />
<rect x="1230.00" y="60.00" width="13.50" height="8.50" fill="#6cb8f4" stroke="#555d68" stroke-width="0.8" />
<path d="M1231 73h5M1237.5 73h5M1231 77h5M1237.5 77h5M1234.5 71.5v3M1239.5 75.5v3" fill="none" stroke="#666e78" stroke-width="1" />
<path d="M1239.5 80.5l5.5-4 5.2 7-5.5 4z" fill="#f6c878" />
<path d="M1245.3 76.3l4.2-3.6 2.6-1 3.6 3-1 3.6-4 3.6z" fill="#f0f0f0" />
<text x="1206.30" y="102.00" font-size="11.7" fill="#ececec" textLength="69.00" lengthAdjust="spacingAndGlyphs" >Eigenschaften</text>
<text x="1218.70" y="116.30" font-size="11.7" fill="#ececec" textLength="45.10" lengthAdjust="spacingAndGlyphs" >anpassen</text>
<path d="M1288.5 64.5L1288.50 56.90A7.6 7.6 0 0 1 1295.08 60.70z" fill="#f59a23" />
<path d="M1288.5 64.5L1295.08 60.70A7.6 7.6 0 0 1 1295.08 68.30z" fill="#f5d020" />
<path d="M1288.5 64.5L1295.08 68.30A7.6 7.6 0 0 1 1288.50 72.10z" fill="#6dd0a0" />
<path d="M1288.5 64.5L1288.50 72.10A7.6 7.6 0 0 1 1281.92 68.30z" fill="#4aa8e8" />
<path d="M1288.5 64.5L1281.92 68.30A7.6 7.6 0 0 1 1281.92 60.70z" fill="#d050e0" />
<path d="M1288.5 64.5L1281.92 60.70A7.6 7.6 0 0 1 1288.50 56.90z" fill="#f07030" />
<rect x="1281.00" y="80.30" width="15.00" height="2.60" fill="#e4e6e6" />
<rect x="1281.00" y="85.30" width="15.00" height="2.60" fill="#e4e6e6" />
<rect x="1281.00" y="90.80" width="15.00" height="3.40" fill="#e4e6e6" />
<path d="M1281 104.5h14" fill="none" stroke="#d4d6d6" stroke-width="1.3" stroke-dasharray="2 1.2"/>
<path d="M1281 108h14" fill="none" stroke="#d4d6d6" stroke-width="1.3" stroke-dasharray="4 1"/>
<path d="M1281 111.5h14" fill="none" stroke="#d4d6d6" stroke-width="1.3" stroke-dasharray="2 1.2"/>
<path d="M1281 115h14" fill="none" stroke="#d4d6d6" stroke-width="1.3" stroke-dasharray="4 1"/>
<rect x="1298.70" y="55.50" width="146.00" height="19.80" fill="#47526a" />
<rect x="1298.70" y="78.00" width="146.00" height="19.50" fill="#47526a" />
<rect x="1298.70" y="101.00" width="146.00" height="19.80" fill="#47526a" />
<rect x="1310.00" y="58.30" width="15.00" height="14.50" fill="#ffffff" />
<text x="1334.70" y="69.60" font-size="11.7" fill="#ececec" textLength="45.30" lengthAdjust="spacingAndGlyphs" >VonLayer</text>
<line x1="1301.70" y1="87.20" x2="1362.00" y2="87.20" stroke="#e0e0e0" stroke-width="1.1" />
<text x="1363.70" y="91.30" font-size="11.2" fill="#ececec" textLength="54.30" lengthAdjust="spacingAndGlyphs" >VONLAYER</text>
<line x1="1301.70" y1="111.30" x2="1362.00" y2="111.30" stroke="#e0e0e0" stroke-width="1.1" />
<text x="1363.70" y="114.40" font-size="11.2" fill="#ececec" textLength="44.30" lengthAdjust="spacingAndGlyphs" >BYLAYER</text>
<path d="M1436.70 63.80h6l-3.00 3.4z" fill="#d8d8d8" />
<path d="M1436.70 86.30h6l-3.00 3.4z" fill="#d8d8d8" />
<path d="M1436.70 109.30h6l-3.00 3.4z" fill="#d8d8d8" />
<text x="1277.50" y="138.30" font-size="11.7" fill="#ececec" textLength="69.20" lengthAdjust="spacingAndGlyphs" >Eigenschaften</text>
<path d="M1352.50 133.70h7l-3.50 4z" fill="#d4d6d8" />
<path d="M1437.5 133l4.5 4.5M1442.3 134v3.8h-3.8" fill="none" stroke="#b8bcc0" stroke-width="1.1" />
<path d="M1460.5 61.5h-3.5v25.5h3.5M1473 61.5h3.5v25.5h-3.5" fill="none" stroke="#d6d8da" stroke-width="1.3" />
<rect x="1462.00" y="65.00" width="9.50" height="6.50" fill="#3f6fa8" stroke="#6cb8f4" stroke-width="1" />
<circle cx="1466.80" cy="80.00" r="4.60" fill="#6a717c" stroke="#c8cacc" stroke-width="1" />
<path d="M1478.50 57.00L1479.59 61.87L1483.80 59.20L1481.13 63.41L1486.00 64.50L1481.13 65.59L1483.80 69.80L1479.59 67.13L1478.50 72.00L1477.41 67.13L1473.20 69.80L1475.87 65.59L1471.00 64.50L1475.87 63.41L1473.20 59.20L1477.41 61.87z" fill="#f8c468" />
<text x="1453.00" y="101.60" font-size="11.7" fill="#ececec" textLength="36.70" lengthAdjust="spacingAndGlyphs" >Gruppe</text>
<path d="M1507 59.5h2v12.5h-2" fill="none" stroke="#d6d8da" stroke-width="1.1" />
<rect x="1499.00" y="61.00" width="5.00" height="4.50" fill="#3f6fa8" stroke="#6cb8f4" stroke-width="1" />
<circle cx="1501.50" cy="69.50" r="2.40" fill="#6a717c" stroke="#c8cacc" stroke-width="1" />
<path d="M1509 62l5 5M1514 62l-5 5" fill="none" stroke="#f08a30" stroke-width="1.4" />
<path d="M1499.5 82.5h-2v13h2M1506.5 82.5h2v5" fill="none" stroke="#d6d8da" stroke-width="1.1" />
<rect x="1500.50" y="84.00" width="4.50" height="4.00" fill="#3f6fa8" stroke="#6cb8f4" stroke-width="1" />
<circle cx="1502.50" cy="91.50" r="2.20" fill="#6a717c" stroke="#c8cacc" stroke-width="1" />
<path d="M1505.5 94l6-6 2 2-6 6-2.6.6z" fill="#f6bd5a" />
<rect x="1493.50" y="101.50" width="22.00" height="20.50" fill="#3e5674" stroke="#79b3e8" stroke-width="1" />
<path d="M1499.5 104.5h-2v13.5h2M1506 104.5h2v3" fill="none" stroke="#d6d8da" stroke-width="1.1" />
<rect x="1500.30" y="106.00" width="4.60" height="4.30" fill="#58c080" stroke="#8fe0b0" stroke-width="0.8" />
<rect x="1500.30" y="112.50" width="4.60" height="4.30" fill="#58c080" stroke="#8fe0b0" stroke-width="0.8" />
<path d="M1506 108.5v9.5l2.3-2.2 1.8 4 1.6-.8-1.8-3.8h3.2z" fill="#f0f0f0" />
<text x="1455.00" y="138.30" font-size="11.7" fill="#ececec" textLength="42.50" lengthAdjust="spacingAndGlyphs" >Gruppen</text>
<path d="M1503.50 133.70h7l-3.50 4z" fill="#d4d6d8" />
<rect x="1548.80" y="69.00" width="27.50" height="6.30" fill="#f6c572" />
<line x1="1551.00" y1="69.00" x2="1551.00" y2="72.50" stroke="#c8923c" stroke-width="0.8" />
<line x1="1554.00" y1="69.00" x2="1554.00" y2="71.50" stroke="#c8923c" stroke-width="0.8" />
<line x1="1557.00" y1="69.00" x2="1557.00" y2="72.50" stroke="#c8923c" stroke-width="0.8" />
<line x1="1560.00" y1="69.00" x2="1560.00" y2="71.50" stroke="#c8923c" stroke-width="0.8" />
<line x1="1563.00" y1="69.00" x2="1563.00" y2="72.50" stroke="#c8923c" stroke-width="0.8" />
<line x1="1566.00" y1="69.00" x2="1566.00" y2="71.50" stroke="#c8923c" stroke-width="0.8" />
<line x1="1569.00" y1="69.00" x2="1569.00" y2="72.50" stroke="#c8923c" stroke-width="0.8" />
<line x1="1572.00" y1="69.00" x2="1572.00" y2="71.50" stroke="#c8923c" stroke-width="0.8" />
<line x1="1575.00" y1="69.00" x2="1575.00" y2="72.50" stroke="#c8923c" stroke-width="0.8" />
<text x="1543.70" y="101.60" font-size="11.7" fill="#ececec" textLength="37.60" lengthAdjust="spacingAndGlyphs" >Messen</text>
<path d="M1560.70 107.90h4.6l-2.30 2.8z" fill="#c4c6c8" />
<path d="M1596.5 62.5v9.5l2.3-2.2 1.8 4 1.6-.8-1.8-3.8h3.2z" fill="#f0f0f0" />
<rect x="1604.00" y="65.00" width="8.00" height="8.00" fill="#e8e8e8" />
<rect x="1605.30" y="66.30" width="2.30" height="2.30" fill="#4da3ec" />
<path d="M1608.5 67.5h2.5M1605.5 70.3h5" fill="none" stroke="#4da3ec" stroke-width="1" />
<path d="M1602.5 58l1 2.2 2.2 .3-1.6 1.6 .4 2.3-2-1.1-2 1.1 .4-2.3-1.6-1.6 2.2-.3z" fill="#f8b040" />
<rect x="1596.50" y="81.50" width="13.50" height="13.50" fill="none" stroke="#58c080" stroke-width="1.2" stroke-dasharray="2 1"/>
<path d="M1599.5 92v-7.5h7.5" fill="none" stroke="#58c080" stroke-width="2" />
<path d="M1605 86v9.5l2.3-2.2 1.8 4 1.6-.8-1.8-3.8h3.2z" fill="#f0f0f0" />
<rect x="1598.30" y="104.30" width="11.40" height="14.70" fill="#d8dada" rx="1" />
<rect x="1600.00" y="106.00" width="8.00" height="3.00" fill="#6a717c" />
<rect x="1600.00" y="110.50" width="2.00" height="1.70" fill="#6a717c" />
<rect x="1603.00" y="110.50" width="2.00" height="1.70" fill="#6a717c" />
<rect x="1606.00" y="110.50" width="2.00" height="1.70" fill="#6a717c" />
<rect x="1600.00" y="113.20" width="2.00" height="1.70" fill="#6a717c" />
<rect x="1603.00" y="113.20" width="2.00" height="1.70" fill="#6a717c" />
<rect x="1606.00" y="113.20" width="2.00" height="1.70" fill="#6a717c" />
<rect x="1600.00" y="115.90" width="2.00" height="1.70" fill="#6a717c" />
<rect x="1603.00" y="115.90" width="2.00" height="1.70" fill="#6a717c" />
<rect x="1606.00" y="115.90" width="2.00" height="1.70" fill="#6a717c" />
<text x="1523.30" y="138.30" font-size="11.7" fill="#ececec" textLength="90.40" lengthAdjust="spacingAndGlyphs" >Dienstprogramme</text>
<path d="M1619.00 133.70h7l-3.50 4z" fill="#d4d6d8" />
<rect x="1653.30" y="60.00" width="21.00" height="25.00" fill="#f0b878" stroke="#c8873c" stroke-width="0.8" />
<rect x="1659.00" y="57.50" width="9.50" height="4.00" fill="#e8e8e8" rx="1" />
<path d="M1660.5 67h11.5l5.5 5.5v15.5h-17z" fill="#dfe2e2" />
<path d="M1672 67v5.5h5.5z" fill="#f8f8f8" />
<text x="1644.20" y="101.60" font-size="11.7" fill="#ececec" textLength="44.10" lengthAdjust="spacingAndGlyphs" >Einfügen</text>
<path d="M1663.70 107.90h4.6l-2.30 2.8z" fill="#c4c6c8" />
<rect x="1703.00" y="58.50" width="11.00" height="10.50" fill="#d8dada" />
<path d="M1705 61.5h7M1705 64h7M1705 66.5h5" fill="none" stroke="#6a717c" stroke-width="1" />
<path d="M1711.5 62l6 8M1717.5 62l-6 8" fill="none" stroke="#e8e8e8" stroke-width="1.2" />
<circle cx="1711.30" cy="71.30" r="1.60" fill="none" stroke="#e8e8e8" stroke-width="1" />
<circle cx="1717.70" cy="71.30" r="1.60" fill="none" stroke="#e8e8e8" stroke-width="1" />
<path d="M1704 81.5h6l2.5 2.5v8h-8.5z" fill="#c8cccc" />
<path d="M1708 85.5h6l2.8 2.8v8h-8.8z" fill="#e4e6e6" stroke="#3b4453" stroke-width="0.6" />
<text x="1637.50" y="138.30" font-size="11.7" fill="#ececec" textLength="80.50" lengthAdjust="spacingAndGlyphs" >Zwischenablage</text>
<path d="M1745 61h14v8.5h16.7v14.7h-30.7z" fill="#dfe2e2" />
<text x="1748.30" y="101.60" font-size="11.7" fill="#ececec" textLength="24.70" lengthAdjust="spacingAndGlyphs" >Basis</text>
<path d="M1758.20 107.90h4.6l-2.30 2.8z" fill="#c4c6c8" />
<text x="1729.70" y="138.30" font-size="11.7" fill="#ececec" textLength="37.50" lengthAdjust="spacingAndGlyphs" >Ansicht</text>
<path d="M1773.00 133.70h7l-3.50 4z" fill="#d4d6d8" />
<path d="M1787 133l4.5 4.5M1791.8 134v3.8h-3.8" fill="none" stroke="#b8bcc0" stroke-width="1.1" />
<path d="M14 170.2C22 170 22 160 25 152C26 149 28 148 31 148H134C137 148 138 150 138 153V170.2z" fill="url(#chk)" />
<path d="M138 170.2V153C138 150 140 148 143 148H248C252 148 253 150 254 153C257 161 257 170 264 170.2z" fill="#3b4453" />
<line x1="235.00" y1="155.50" x2="241.00" y2="161.50" stroke="#d0d2d4" stroke-width="1.6" />
<line x1="241.00" y1="155.50" x2="235.00" y2="161.50" stroke="#d0d2d4" stroke-width="1.6" />
<path d="M262 153H276C279 153 280 156 281 159C282 163 281 166 278 166H270C265 166 264 158 262 153z" fill="url(#chk)" />
<path d="M271 156.5v7M267.5 160h7" fill="none" stroke="#e0e0e0" stroke-width="1.6" />
<rect x="8.00" y="180.00" width="1.00" height="1.00" fill="#c8cacc" />
<rect x="8.00" y="182.00" width="1.00" height="1.00" fill="#c8cacc" />
<rect x="10.00" y="180.00" width="1.00" height="1.00" fill="#c8cacc" />
<rect x="10.00" y="182.00" width="1.00" height="1.00" fill="#c8cacc" />
<rect x="12.00" y="180.00" width="1.00" height="1.00" fill="#c8cacc" />
<rect x="12.00" y="182.00" width="1.00" height="1.00" fill="#c8cacc" />
<rect x="14.00" y="180.00" width="1.00" height="1.00" fill="#c8cacc" />
<rect x="14.00" y="182.00" width="1.00" height="1.00" fill="#c8cacc" />
<rect x="16.00" y="180.00" width="1.00" height="1.00" fill="#c8cacc" />
<rect x="16.00" y="182.00" width="1.00" height="1.00" fill="#c8cacc" />
<text x="18.00" y="607.00" font-size="11.5" fill="#e4e4e4" textLength="70.00" lengthAdjust="spacingAndGlyphs" transform="rotate(-90 18.00 607.00)" >Eigenschaften</text>
<clipPath id="cv"><rect x="25.8" y="173.3" width="1715" height="478.7"/></clipPath>
<g clip-path="url(#cv)">
<path d="M175.4 652.5 L281.8 599.1 L758.6 412.4 L1298.7 239.4 L1544.0 172.9" fill="none" stroke="#64dea6" stroke-width="1.2" stroke-linejoin="round"/>
<path d="M265.5 652.5 L300.0 634.0 L772.0 453.3 L1312.0 294.8 L1450.0 259.3 L1520.0 242.2 L1743.0 186.8" fill="none" stroke="#64dea6" stroke-width="1.2" stroke-linejoin="round"/>
<path d="M296.0 650.6 L305.6 648.0 L793.0 522.8 L1330.2 362.4 L1743.0 255.2" fill="none" stroke="#64dea6" stroke-width="1.2" stroke-linejoin="round"/>
<path d="M797.0 487.6 L900.0 452.0 L1100.0 377.9 L1300.0 302.8 L1450.0 246.3 L1520.0 222.4 L1651.0 172.8" fill="none" stroke="#64dea6" stroke-width="1.2" stroke-linejoin="round"/>
<path d="M1336.7 329.0 L1743.0 197.5" fill="none" stroke="#64dea6" stroke-width="1.2" stroke-linejoin="round"/>
<line x1="1660.80" y1="173.00" x2="1666.90" y2="185.50" stroke="#74ebb3" stroke-width="3" />
<line x1="1673.40" y1="173.00" x2="1678.00" y2="181.50" stroke="#74ebb3" stroke-width="3" />
<text x="225.00" y="561.50" font-size="36" fill="#74ebb3" textLength="76.00" lengthAdjust="spacingAndGlyphs" transform="rotate(-24 225.00 561.50)" >18-15</text>
<circle cx="272.80" cy="576.30" r="12.70" fill="none" stroke="#64dea6" stroke-width="1.2" />
<circle cx="272.80" cy="576.30" r="0.70" fill="#64dea6" />
<text x="296.50" y="578.50" font-size="26" fill="#74ebb3" textLength="37.00" lengthAdjust="spacingAndGlyphs" transform="rotate(-20 296.50 578.50)" >-40</text>
<text x="313.90" y="615.50" font-size="26" fill="#74ebb3" textLength="37.00" lengthAdjust="spacingAndGlyphs" transform="rotate(-20 313.90 615.50)" >-40</text>
<path d="M278.5 590l5.5 9-5.5 1z" fill="#64dea6" />
<line x1="279.00" y1="589.00" x2="283.50" y2="602.00" stroke="#64dea6" stroke-width="1" />
<circle cx="283.30" cy="602.30" r="1.20" fill="#64dea6" />
<line x1="299.30" y1="633.50" x2="305.80" y2="651.00" stroke="#64dea6" stroke-width="1" />
<circle cx="301.50" cy="639.30" r="1.00" fill="#64dea6" />
<path d="M302 646l6 6M307.5 646.5l-5.5 6M300 650.5h10" fill="none" stroke="#64dea6" stroke-width="0.8" />
<text x="326.00" y="648.00" font-size="20" fill="#74ebb3" textLength="9.00" lengthAdjust="spacingAndGlyphs" transform="rotate(-15 326.00 648.00)" >v</text>
<clipPath id="h1"><circle cx="784.4" cy="495.2" r="13.2"/></clipPath>
<circle cx="784.40" cy="495.20" r="13.20" fill="#58cf9a" />
<g clip-path="url(#h1)">
<line x1="771.20" y1="483.70" x2="797.60" y2="480.70" stroke="#2f8f68" stroke-width="0.7" />
<line x1="771.20" y1="486.70" x2="797.60" y2="483.70" stroke="#2f8f68" stroke-width="0.7" />
<line x1="771.20" y1="489.70" x2="797.60" y2="486.70" stroke="#2f8f68" stroke-width="0.7" />
<line x1="771.20" y1="492.70" x2="797.60" y2="489.70" stroke="#2f8f68" stroke-width="0.7" />
<line x1="771.20" y1="495.70" x2="797.60" y2="492.70" stroke="#2f8f68" stroke-width="0.7" />
<line x1="771.20" y1="498.70" x2="797.60" y2="495.70" stroke="#2f8f68" stroke-width="0.7" />
<line x1="771.20" y1="501.70" x2="797.60" y2="498.70" stroke="#2f8f68" stroke-width="0.7" />
<line x1="771.20" y1="504.70" x2="797.60" y2="501.70" stroke="#2f8f68" stroke-width="0.7" />
<line x1="771.20" y1="507.70" x2="797.60" y2="504.70" stroke="#2f8f68" stroke-width="0.7" />
</g>
<circle cx="784.40" cy="495.20" r="13.20" fill="none" stroke="#64dea6" stroke-width="1" />
<line x1="758.60" y1="412.40" x2="778.60" y2="481.80" stroke="#64dea6" stroke-width="1" />
<path d="M760.2 427.5h7.6l-2.8 8z" fill="#64dea6" />
<line x1="754.50" y1="440.50" x2="776.30" y2="433.60" stroke="#64dea6" stroke-width="1" />
<line x1="766.00" y1="454.00" x2="776.00" y2="482.00" stroke="#64dea6" stroke-width="1" />
<line x1="772.00" y1="455.00" x2="793.50" y2="487.00" stroke="#64dea6" stroke-width="1" />
<circle cx="772.30" cy="458.00" r="1.20" fill="#64dea6" />
<path d="M773.5 472.5h9l-3 10z" fill="#64dea6" />
<text x="774.50" y="396.80" font-size="26" fill="#74ebb3" textLength="37.00" lengthAdjust="spacingAndGlyphs" transform="rotate(-18 774.50 396.80)" >-40</text>
<text x="787.30" y="437.70" font-size="26" fill="#74ebb3" textLength="37.00" lengthAdjust="spacingAndGlyphs" transform="rotate(-18 787.30 437.70)" >-40</text>
<path d="M797 488l9-8 2 10z" fill="#64dea6" />
<path d="M806 485l10-8 3 10z" fill="#4fbf8e" />
<path d="M816 481l9-7 3 9z" fill="#4fbf8e" />
<path d="M852 463l29-4.3-25 14.3z" fill="#5ad09c" />
<line x1="836.00" y1="466.00" x2="839.00" y2="478.00" stroke="#64dea6" stroke-width="0.9" />
<line x1="828.00" y1="469.00" x2="831.00" y2="481.00" stroke="#64dea6" stroke-width="0.9" />
<text x="817.50" y="505.50" font-size="26" fill="#74ebb3" textLength="56.50" lengthAdjust="spacingAndGlyphs" transform="rotate(-18.4 817.50 505.50)" >(359)</text>
<text x="826.00" y="484.00" font-size="13" fill="#58c897" textLength="15.00" lengthAdjust="spacingAndGlyphs" transform="rotate(-19.5 826.00 484.00)" >LA</text>
<path d="M793 522.8l-22-1 2.5 11.2z" fill="#5ad09c" />
<path d="M793 522.8l19.5-11.3 1.8 10.5z" fill="#5ad09c" />
<line x1="788.00" y1="508.00" x2="793.30" y2="523.50" stroke="#64dea6" stroke-width="1" />
<path d="M790 520l6 6M796 520l-6 6" fill="none" stroke="#64dea6" stroke-width="0.8" />
<circle cx="746.40" cy="534.70" r="4.80" fill="#4fbf8e" stroke="#64dea6" stroke-width="1" />
<path d="M743.4 536.7l6-4M744.4 538.7l5-3.4M742.4 534.7l6-4" fill="none" stroke="#256a4c" stroke-width="0.7" />
<circle cx="841.80" cy="508.30" r="4.80" fill="#4fbf8e" stroke="#64dea6" stroke-width="1" />
<path d="M838.8 510.3l6-4M839.8 512.3l5-3.4M837.8 508.3l6-4" fill="none" stroke="#256a4c" stroke-width="0.7" />
<path d="M841.8 508.3A20.8 20.8 0 0 1 852.9 548.4L757.5 574.8A20.8 20.8 0 0 1 746.4 534.7" fill="none" stroke="#64dea6" stroke-width="1.1" />
<text x="764.20" y="565.00" font-size="36" fill="#74ebb3" textLength="80.00" lengthAdjust="spacingAndGlyphs" transform="rotate(-16.5 764.20 565.00)" >18-17</text>
<path d="M1143.4 333.4A19.3 19.3 0 1 1 1149.3 367.0" fill="none" stroke="#64dea6" stroke-width="1" />
<path d="M1131 349.3L1132.8 334L1140 335.7z" fill="#5ad09c" />
<path d="M1136.2 363.4L1151.5 367.6L1148 373.6z" fill="#5ad09c" />
<path d="M1128.5 346.5l6 5M1133.5 345l-4 7.5" fill="none" stroke="#64dea6" stroke-width="0.8" />
<path d="M1133 361l6.5 5M1138 360l-3.5 7.5" fill="none" stroke="#64dea6" stroke-width="0.8" />
<circle cx="1154.40" cy="346.80" r="1.30" fill="#64dea6" />
<text x="1151.50" y="344.00" font-size="26" fill="#74ebb3" textLength="37.00" lengthAdjust="spacingAndGlyphs" transform="rotate(-19.5 1151.50 344.00)" >[-0]</text>
<text x="1157.00" y="365.50" font-size="26" fill="#74ebb3" textLength="26.00" lengthAdjust="spacingAndGlyphs" transform="rotate(-17 1157.00 365.50)" >[0]</text>
<clipPath id="h2"><circle cx="1323.3" cy="335.3" r="13.2"/></clipPath>
<circle cx="1323.30" cy="335.30" r="13.20" fill="#58cf9a" />
<g clip-path="url(#h2)">
<line x1="1310.10" y1="323.80" x2="1336.50" y2="320.80" stroke="#2f8f68" stroke-width="0.7" />
<line x1="1310.10" y1="326.80" x2="1336.50" y2="323.80" stroke="#2f8f68" stroke-width="0.7" />
<line x1="1310.10" y1="329.80" x2="1336.50" y2="326.80" stroke="#2f8f68" stroke-width="0.7" />
<line x1="1310.10" y1="332.80" x2="1336.50" y2="329.80" stroke="#2f8f68" stroke-width="0.7" />
<line x1="1310.10" y1="335.80" x2="1336.50" y2="332.80" stroke="#2f8f68" stroke-width="0.7" />
<line x1="1310.10" y1="338.80" x2="1336.50" y2="335.80" stroke="#2f8f68" stroke-width="0.7" />
<line x1="1310.10" y1="341.80" x2="1336.50" y2="338.80" stroke="#2f8f68" stroke-width="0.7" />
<line x1="1310.10" y1="344.80" x2="1336.50" y2="341.80" stroke="#2f8f68" stroke-width="0.7" />
<line x1="1310.10" y1="347.80" x2="1336.50" y2="344.80" stroke="#2f8f68" stroke-width="0.7" />
</g>
<circle cx="1323.30" cy="335.30" r="13.20" fill="none" stroke="#64dea6" stroke-width="1" />
<line x1="1298.70" y1="239.40" x2="1319.40" y2="322.20" stroke="#64dea6" stroke-width="1" />
<path d="M1300.6 260h7.6l-2.8 8z" fill="#64dea6" />
<line x1="1294.00" y1="271.60" x2="1318.70" y2="265.90" stroke="#64dea6" stroke-width="1" />
<line x1="1308.00" y1="295.70" x2="1314.80" y2="321.00" stroke="#64dea6" stroke-width="1" />
<line x1="1319.40" y1="292.30" x2="1325.20" y2="318.70" stroke="#64dea6" stroke-width="1" />
<line x1="1313.00" y1="296.00" x2="1323.00" y2="318.00" stroke="#64dea6" stroke-width="0.9" />
<path d="M1309 314.5h9l-2.6 9.5z" fill="#64dea6" />
<path d="M1318.5 312.5h9l-4 10z" fill="#64dea6" />
<text x="1314.60" y="224.00" font-size="26" fill="#74ebb3" textLength="37.00" lengthAdjust="spacingAndGlyphs" transform="rotate(-19 1314.60 224.00)" >-40</text>
<text x="1335.50" y="278.00" font-size="26" fill="#74ebb3" textLength="37.00" lengthAdjust="spacingAndGlyphs" transform="rotate(-19 1335.50 278.00)" >-40</text>
<text x="1331.30" y="318.50" font-size="26" fill="#74ebb3" textLength="28.00" lengthAdjust="spacingAndGlyphs" transform="rotate(-19 1331.30 318.50)" >40</text>
<text x="1357.20" y="348.80" font-size="26" fill="#74ebb3" textLength="58.00" lengthAdjust="spacingAndGlyphs" transform="rotate(-16.7 1357.20 348.80)" >(343)</text>
<path d="M1337 329l9.5-7 1.5 9.5z" fill="#64dea6" />
<path d="M1344 327l22-11 1.5 12.5z" fill="#5ad09c" />
<path d="M1391.8 304.8l29-2.4-26.5 14z" fill="#5ad09c" />
<line x1="1372.00" y1="309.00" x2="1376.00" y2="325.00" stroke="#64dea6" stroke-width="0.9" />
<line x1="1381.00" y1="305.00" x2="1385.00" y2="321.00" stroke="#64dea6" stroke-width="0.9" />
<line x1="1326.00" y1="348.00" x2="1330.20" y2="362.40" stroke="#64dea6" stroke-width="1" />
<path d="M1327 359.5l6 6M1333 359.5l-6 6" fill="none" stroke="#64dea6" stroke-width="0.8" />
<text x="1299.80" y="404.30" font-size="36" fill="#74ebb3" textLength="79.00" lengthAdjust="spacingAndGlyphs" transform="rotate(-15.5 1299.80 404.30)" >18-18</text>
</g>
<text x="30.00" y="190.80" font-size="11.5" fill="#cfd2d5" textLength="134.50" lengthAdjust="spacingAndGlyphs" >[−][Oben][2D-Drahtkörper]</text>
<line x1="35.00" y1="594.50" x2="77.00" y2="594.50" stroke="#d2d4d6" stroke-width="1.2" />
<rect x="77.00" y="590.00" width="9.00" height="9.00" fill="none" stroke="#d2d4d6" stroke-width="1.1" />
<line x1="81.50" y1="599.00" x2="81.50" y2="642.50" stroke="#d2d4d6" stroke-width="1.2" />
<path d="M39 580.5l12 12.5M51 580.5l-12 12.5" fill="none" stroke="#d2d4d6" stroke-width="1.1" />
<path d="M84.5 626.5l5.5 6.5 5.5-6.5M90 633v7" fill="none" stroke="#d2d4d6" stroke-width="1.1" />
<rect x="1684.00" y="188.80" width="9.50" height="2.60" fill="#ececec" />
<rect x="1702.50" y="185.50" width="7.50" height="7.50" fill="none" stroke="#ececec" stroke-width="1.6" />
<path d="M1705 185v-2.3h7.5v7.5h-2.3" fill="none" stroke="#ececec" stroke-width="1.3" />
<path d="M1721.5 183.5l8 8.5M1729.5 183.5l-8 8.5" fill="none" stroke="#ececec" stroke-width="2" />
<path d="M1639.5 207.5l4.7-4.5 4.7 4.5h-1.4v5h-2.3v-3h-2v3h-2.3v-5z" fill="#5b6472" />
<circle cx="1685.40" cy="252.40" r="34.90" fill="none" stroke="#5d6371" stroke-width="7.6" stroke-opacity=".82"/>
<rect x="1668.80" y="235.40" width="33.60" height="34.00" fill="#dfe1e1" />
<rect x="1673.50" y="240.00" width="24.50" height="25.00" fill="#c9ced2" />
<text x="1685.60" y="252.60" font-size="8.2" fill="#4a5260" text-anchor="middle" font-weight="bold" textLength="18.00" lengthAdjust="spacingAndGlyphs" transform="rotate(180 1685.60 252.60)" dominant-baseline="central" stroke="#4a5260" stroke-width=".35">OBEN</text>
<text x="1685.40" y="213.00" font-size="14.5" fill="#6fb0ee" text-anchor="middle" font-weight="bold" transform="rotate(180 1685.40 213.00)" dominant-baseline="central" stroke="#6fb0ee" stroke-width=".5">S</text>
<text x="1685.60" y="290.50" font-size="14.5" fill="#dcdedf" text-anchor="middle" font-weight="bold" transform="rotate(180 1685.60 290.50)" dominant-baseline="central" stroke="#dcdedf" stroke-width=".5">N</text>
<text x="1648.00" y="252.80" font-size="14.5" fill="#dcdedf" text-anchor="middle" font-weight="bold" transform="rotate(180 1648.00 252.80)" dominant-baseline="central" stroke="#dcdedf" stroke-width=".5">O</text>
<text x="1722.30" y="252.80" font-size="14.5" fill="#dcdedf" text-anchor="middle" font-weight="bold" transform="rotate(180 1722.30 252.80)" dominant-baseline="central" stroke="#dcdedf" stroke-width=".5">W</text>
<path d="M1682.65 226.50h5.5l-2.75 3z" fill="#e4e4e4" />
<path d="M1682.65 278.50h5.5l-2.75 -3z" fill="#e4e4e4" />
<path d="M1660 249.5l3 3-3 3z" fill="#e4e4e4" />
<path d="M1710.5 249.5l-3 3 3 3z" fill="#e4e4e4" />
<path d="M1716 204C1720 204 1723.5 205.3 1726.5 207.5" fill="none" stroke="#59616f" stroke-width="3.4" />
<path d="M1711.3 203.6l6.2-4.6v8.6z" fill="#59616f" />
<path d="M1729.8 211.5C1732 214.5 1733.3 218 1733.5 221" fill="none" stroke="#59616f" stroke-width="3.4" />
<path d="M1733.6 226.5l-4.3-6.5h8.4z" fill="#59616f" />
<path d="M1726.75 293.25h5.5l-2.75 3.5z" fill="#59616f" />
<rect x="1663.30" y="311.40" width="43.40" height="15.80" fill="#c9cdd1" rx="3" />
<text x="1667.50" y="323.30" font-size="11" fill="#505866" textLength="22.00" lengthAdjust="spacingAndGlyphs" >WKS</text>
<path d="M1694 319h8" fill="none" stroke="#aeb4ba" stroke-width="1" />
<rect x="79.20" y="655.00" width="1716.80" height="32.00" fill="#ffffff" rx="2.5" />
<rect x="30.10" y="662.20" width="1.80" height="1.80" fill="#eaeaea" />
<rect x="33.00" y="662.20" width="1.80" height="1.80" fill="#eaeaea" />
<rect x="30.10" y="665.00" width="1.80" height="1.80" fill="#eaeaea" />
<rect x="33.00" y="665.00" width="1.80" height="1.80" fill="#eaeaea" />
<rect x="30.10" y="667.80" width="1.80" height="1.80" fill="#eaeaea" />
<rect x="33.00" y="667.80" width="1.80" height="1.80" fill="#eaeaea" />
<rect x="30.10" y="670.60" width="1.80" height="1.80" fill="#eaeaea" />
<rect x="33.00" y="670.60" width="1.80" height="1.80" fill="#eaeaea" />
<rect x="30.10" y="673.40" width="1.80" height="1.80" fill="#eaeaea" />
<rect x="33.00" y="673.40" width="1.80" height="1.80" fill="#eaeaea" />
<rect x="30.10" y="676.20" width="1.80" height="1.80" fill="#eaeaea" />
<rect x="33.00" y="676.20" width="1.80" height="1.80" fill="#eaeaea" />
<path d="M40 666l7.5 7.5M47.5 666l-7.5 7.5" fill="none" stroke="#f0f0f0" stroke-width="1.7" />
<path d="M60.5 676.5l7-7" fill="none" stroke="#f0f0f0" stroke-width="2.4" stroke-linecap="round"/>
<path d="M72.3 666.2a3.6 3.6 0 1 1-3.2-2l-1.6 2.6 1.6 1.6z" fill="#f0f0f0" />
<rect x="82.50" y="666.00" width="14.50" height="11.00" fill="#c9cccc" />
<rect x="83.70" y="668.80" width="12.00" height="7.00" fill="#eeeeee" />
<path d="M85 673.5l2-1.5-2-1.5M88.5 674h4" fill="none" stroke="#9a9fa4" stroke-width="0.8" />
<path d="M100.25 669.80h5.5l-2.75 3z" fill="#9fa3a7" />
<text x="113.00" y="674.30" font-size="11" fill="#858585" font-style="italic" style="font-family:'Liberation Mono',monospace" textLength="97.30" lengthAdjust="spacingAndGlyphs" >Befehl eingeben</text>
<path d="M28.5 694v9M30.5 694v9" fill="none" stroke="#c0c4c8" stroke-width="0.9" />
<text x="47.20" y="709.30" font-size="11.7" fill="#ececec" textLength="84.50" lengthAdjust="spacingAndGlyphs" >Aktueller Layer: 0</text>
<path d="M45 721h5l1.3 1.8h6.7v9.7h-13z" fill="#d4d8d8" />
<path d="M52 728.5h8.5l-3 3.5v4h-2.5v-4z" fill="#d4d8d8" stroke="#3b4453" stroke-width="0.7" />
<path d="M67 721h5l1.3 1.8h7.7v10.2h-14z" fill="#d4d8d8" />
<line x1="88.00" y1="719.00" x2="88.00" y2="736.00" stroke="#2a313c" stroke-width="1.2" />
<path d="M97 723.2l4.5 -3.2h8.5l-4.5 3.2z" fill="#d4d8d8" />
<path d="M96 726.6l3 -2.6h5l-3 2.6z" fill="#aab0b4" />
<rect x="103.00" y="724.00" width="7.50" height="11.00" fill="#eceeee" rx="1" />
<rect x="104.30" y="725.50" width="5.00" height="3.00" fill="#5fb0f0" />
<path d="M104.5 731h4.5M104.5 733h4.5" fill="none" stroke="#555" stroke-width="0.8" />
<path d="M138 723l4.5 -3h9l-4.5 3z" fill="#d4d8d8" />
<path d="M138 726.6l4.5 -3h9l-4.5 3z" fill="#d4d8d8" />
<path d="M138 730.2l4.5 -3h9l-4.5 3z" fill="#d4d8d8" />
<path d="M148.50 726.40L149.29 729.09L151.75 727.75L150.41 730.21L153.10 731.00L150.41 731.79L151.75 734.25L149.29 732.91L148.50 735.60L147.71 732.91L145.25 734.25L146.59 731.79L143.90 731.00L146.59 730.21L145.25 727.75L147.71 729.09z" fill="#f8c468" />
<path d="M160 723l4.5 -3h9l-4.5 3z" fill="#d4d8d8" />
<path d="M160 726.6l4.5 -3h9l-4.5 3z" fill="#d4d8d8" />
<path d="M160 730.2l4.5 -3h9l-4.5 3z" fill="#d4d8d8" />
<line x1="165.00" y1="731.00" x2="173.00" y2="731.00" stroke="#5fb0f0" stroke-width="1.2" />
<line x1="167.00" y1="727.54" x2="171.00" y2="734.46" stroke="#5fb0f0" stroke-width="1.2" />
<line x1="171.00" y1="727.54" x2="167.00" y2="734.46" stroke="#5fb0f0" stroke-width="1.2" />
<path d="M181 723l4.5 -3h9l-4.5 3z" fill="#d4d8d8" />
<path d="M181 726.6l4.5 -3h9l-4.5 3z" fill="#d4d8d8" />
<path d="M181 730.2l4.5 -3h9l-4.5 3z" fill="#d4d8d8" />
<path d="M189.5 727.5l6 6M195.5 727.5l-6 6" fill="none" stroke="#f08a30" stroke-width="1.6" />
<path d="M203 723l4.5 -3h9l-4.5 3z" fill="#d4d8d8" />
<path d="M203 726.6l4.5 -3h9l-4.5 3z" fill="#d4d8d8" />
<path d="M203 730.2l4.5 -3h9l-4.5 3z" fill="#d4d8d8" />
<path d="M209.5 731l2.5 2.5 5-6" fill="none" stroke="#3fc080" stroke-width="1.7" />
<rect x="42.50" y="738.70" width="88.00" height="197.50" fill="none" stroke="#2f3743" stroke-width="1" />
<rect x="43.00" y="739.20" width="87.00" height="20.30" fill="#3f485a" />
<text x="48.00" y="752.20" font-size="11.7" fill="#ececec" textLength="24.00" lengthAdjust="spacingAndGlyphs" >Filter</text>
<path d="M120 745.5l-4 4 4 4M126 745.5l-4 4 4 4" fill="none" stroke="#e4e4e4" stroke-width="2" />
<path d="M71.5 779L71.5 877.5" fill="none" stroke="#b4bac2" stroke-width="1" stroke-dasharray="1 1"/>
<path d="M72 790.7L82 790.7" fill="none" stroke="#b4bac2" stroke-width="1" stroke-dasharray="1 1"/>
<path d="M72 808L82 808" fill="none" stroke="#b4bac2" stroke-width="1" stroke-dasharray="1 1"/>
<path d="M72 825.3L82 825.3" fill="none" stroke="#b4bac2" stroke-width="1" stroke-dasharray="1 1"/>
<path d="M72 842.7L82 842.7" fill="none" stroke="#b4bac2" stroke-width="1" stroke-dasharray="1 1"/>
<path d="M72 860L82 860" fill="none" stroke="#b4bac2" stroke-width="1" stroke-dasharray="1 1"/>
<path d="M72 877.5L82 877.5" fill="none" stroke="#b4bac2" stroke-width="1" stroke-dasharray="1 1"/>
<path d="M58 773L64 773" fill="none" stroke="#b4bac2" stroke-width="1" stroke-dasharray="1 1"/>
<rect x="50.50" y="769.00" width="7.50" height="7.50" fill="#e8e8e8" stroke="#8a93a0" stroke-width="0.8" />
<line x1="52.00" y1="772.80" x2="56.50" y2="772.80" stroke="#333" stroke-width="1" />
<rect x="67.80" y="856.00" width="7.50" height="7.50" fill="#e8e8e8" stroke="#8a93a0" stroke-width="0.8" />
<line x1="69.30" y1="859.80" x2="73.80" y2="859.80" stroke="#333" stroke-width="1" />
<line x1="71.50" y1="857.50" x2="71.50" y2="862.00" stroke="#333" stroke-width="1" />
<path d="M65.5 768.9l3.5 -2.4h7l-3.5 2.4z" fill="#d4d8d8" />
<path d="M65.5 772.1l3.5 -2.4h7l-3.5 2.4z" fill="#d4d8d8" />
<path d="M65.5 775.3l3.5 -2.4h7l-3.5 2.4z" fill="#d4d8d8" />
<text x="82.70" y="777.00" font-size="11.7" fill="#ececec" textLength="24.00" lengthAdjust="spacingAndGlyphs" >ALLE</text>
<path d="M83 784h4l1 1.5h6v7.5h-11z" fill="#d4d8d8" />
<path d="M88.5 789.5h7l-2.5 3v3.5h-2v-3.5z" fill="#e8e8e8" stroke="#3b4453" stroke-width="0.6" />
<path d="M83 801.5h4l1 1.5h6v7.5h-11z" fill="#d4d8d8" />
<path d="M88.5 807.0h7l-2.5 3v3.5h-2v-3.5z" fill="#e8e8e8" stroke="#3b4453" stroke-width="0.6" />
<path d="M83 825.9l3.5 -2.4h7l-3.5 2.4z" fill="#d4d8d8" />
<path d="M83 828.9l3.5 -2.4h7l-3.5 2.4z" fill="#d4d8d8" />
<path d="M88.00 817.40L88.62 819.50L90.55 818.45L89.50 820.38L91.60 821.00L89.50 821.62L90.55 823.55L88.62 822.50L88.00 824.60L87.38 822.50L85.45 823.55L86.50 821.62L84.40 821.00L86.50 820.38L85.45 818.45L87.38 819.50z" fill="#f8c468" />
<path d="M89 827.5l5-5" fill="none" stroke="#e8e8e8" stroke-width="1.3" />
<path d="M83 836h4l1 1.5h6v7.5h-11z" fill="#d4d8d8" />
<path d="M88 844l2.3 2.5 4.5-5.5" fill="none" stroke="#3fc080" stroke-width="1.7" />
<rect x="86.00" y="853.00" width="7.00" height="9.00" fill="#dfe3e3" rx="0.8" />
<rect x="84.00" y="857.00" width="7.00" height="8.50" fill="#c9d0d4" rx="0.8" stroke="#3b4453" stroke-width="0.6" />
<path d="M88 863.5h7" fill="none" stroke="#5fb0f0" stroke-width="1.5" />
<circle cx="87.00" cy="855.50" r="1.60" fill="none" stroke="#5fb0f0" stroke-width="1" />
<rect x="86.00" y="871.00" width="7.00" height="9.00" fill="#dfe3e3" rx="0.8" />
<rect x="84.00" y="875.00" width="7.00" height="8.50" fill="#c9d0d4" rx="0.8" stroke="#3b4453" stroke-width="0.6" />
<path d="M88 881.5h7" fill="none" stroke="#5fb0f0" stroke-width="1.5" />
<circle cx="87.00" cy="873.50" r="1.60" fill="none" stroke="#5fb0f0" stroke-width="1" />
<clipPath id="fp"><rect x="43" y="760" width="87" height="176"/></clipPath><g clip-path="url(#fp)">
<rect x="99.00" y="834.00" width="32.00" height="17.30" fill="#5379ad" />
<text x="100.70" y="795.00" font-size="11.7" fill="#ececec" textLength="30.00" lengthAdjust="spacingAndGlyphs" >Alle N</text>
<text x="100.70" y="812.30" font-size="11.7" fill="#ececec" textLength="33.50" lengthAdjust="spacingAndGlyphs" >alle Ve</text>
<text x="100.70" y="829.60" font-size="11.7" fill="#ececec" textLength="26.50" lengthAdjust="spacingAndGlyphs" >Nicht</text>
<text x="100.70" y="847.00" font-size="11.7" fill="#ececec" textLength="30.50" lengthAdjust="spacingAndGlyphs" >OLAC</text>
<text x="100.70" y="864.30" font-size="11.7" fill="#ececec" textLength="23.00" lengthAdjust="spacingAndGlyphs" >XRef</text>
<text x="100.70" y="882.00" font-size="11.7" fill="#ececec" textLength="32.00" lengthAdjust="spacingAndGlyphs" >Xref-Ü</text>
</g>
<rect x="44.00" y="897.30" width="84.50" height="14.50" fill="#f0f0f0" />
<rect x="59.00" y="898.50" width="22.00" height="12.00" fill="#c9cbcd" />
<path d="M51.5 900.5l-3.5 4 3.5 4" fill="none" stroke="#555" stroke-width="1.3" />
<path d="M120.5 900.5l3.5 4-3.5 4" fill="none" stroke="#555" stroke-width="1.3" />
<line x1="43.00" y1="915.50" x2="130.00" y2="915.50" stroke="#2f3743" stroke-width="1" />
<rect x="48.00" y="919.00" width="10.00" height="10.00" fill="#ffffff" />
<text x="63.00" y="928.20" font-size="11.7" fill="#ececec" textLength="37.00" lengthAdjust="spacingAndGlyphs" >Filter in</text>
<path d="M120 921l-4 4 4 4M126 921l-4 4 4 4" fill="none" stroke="#e4e4e4" stroke-width="2" />
<rect x="135.00" y="738.50" width="1645.00" height="21.50" fill="#454f63" />
<line x1="151.30" y1="739.00" x2="151.30" y2="760.00" stroke="#363f4e" stroke-width="1" />
<line x1="238.20" y1="739.00" x2="238.20" y2="760.00" stroke="#363f4e" stroke-width="1" />
<line x1="255.30" y1="739.00" x2="255.30" y2="760.00" stroke="#363f4e" stroke-width="1" />
<line x1="272.40" y1="739.00" x2="272.40" y2="760.00" stroke="#363f4e" stroke-width="1" />
<line x1="289.50" y1="739.00" x2="289.50" y2="760.00" stroke="#363f4e" stroke-width="1" />
<line x1="334.30" y1="739.00" x2="334.30" y2="760.00" stroke="#363f4e" stroke-width="1" />
<line x1="394.30" y1="739.00" x2="394.30" y2="760.00" stroke="#363f4e" stroke-width="1" />
<line x1="459.00" y1="739.00" x2="459.00" y2="760.00" stroke="#363f4e" stroke-width="1" />
<line x1="509.00" y1="739.00" x2="509.00" y2="760.00" stroke="#363f4e" stroke-width="1" />
<line x1="559.30" y1="739.00" x2="559.30" y2="760.00" stroke="#363f4e" stroke-width="1" />
<line x1="576.70" y1="739.00" x2="576.70" y2="760.00" stroke="#363f4e" stroke-width="1" />
<line x1="781.70" y1="739.00" x2="781.70" y2="760.00" stroke="#363f4e" stroke-width="1" />
<line x1="220.80" y1="739.00" x2="220.80" y2="936.00" stroke="#2d3441" stroke-width="1.6" />
<text x="139.00" y="753.30" font-size="11.7" fill="#ececec" textLength="10.00" lengthAdjust="spacingAndGlyphs" >S..</text>
<text x="156.00" y="753.30" font-size="11.7" fill="#ececec" textLength="30.00" lengthAdjust="spacingAndGlyphs" >Name</text>
<text x="226.00" y="753.30" font-size="11.7" fill="#ececec" textLength="10.00" lengthAdjust="spacingAndGlyphs" >E..</text>
<text x="243.50" y="753.30" font-size="11.7" fill="#ececec" textLength="9.50" lengthAdjust="spacingAndGlyphs" >F..</text>
<text x="260.00" y="753.30" font-size="11.7" fill="#ececec" textLength="10.00" lengthAdjust="spacingAndGlyphs" >S..</text>
<text x="277.00" y="753.30" font-size="11.7" fill="#ececec" textLength="10.00" lengthAdjust="spacingAndGlyphs" >P..</text>
<text x="293.30" y="753.30" font-size="11.7" fill="#ececec" textLength="27.70" lengthAdjust="spacingAndGlyphs" >Farbe</text>
<text x="338.30" y="753.30" font-size="11.7" fill="#ececec" textLength="46.70" lengthAdjust="spacingAndGlyphs" >Linientyp</text>
<text x="399.00" y="753.30" font-size="11.7" fill="#ececec" textLength="52.70" lengthAdjust="spacingAndGlyphs" >Linienstä...</text>
<text x="463.30" y="753.30" font-size="11.7" fill="#ececec" textLength="40.00" lengthAdjust="spacingAndGlyphs" >Transp...</text>
<text x="513.30" y="753.30" font-size="11.7" fill="#ececec" textLength="33.40" lengthAdjust="spacingAndGlyphs" >Plotstil</text>
<text x="564.00" y="753.30" font-size="11.7" fill="#ececec" textLength="10.00" lengthAdjust="spacingAndGlyphs" >F..</text>
<text x="581.00" y="753.30" font-size="11.7" fill="#ececec" textLength="68.00" lengthAdjust="spacingAndGlyphs" >Beschreibung</text>
<path d="M212.50 751.60h7l-3.50 -4z" fill="#e0e0e0" />
<path d="M136.7 771.40l4.8-5.2h7.8l-4.8 5.2z" fill="#6cb8f2" />
<text x="155.00" y="772.50" font-size="11.7" fill="#ececec" textLength="44.00" lengthAdjust="spacingAndGlyphs" >_Bestand</text>
<circle cx="230.50" cy="767.53" r="4.51" fill="#f8c468" />
<rect x="228.34" y="771.16" width="4.31" height="2.35" fill="#f8c468" />
<rect x="228.74" y="773.70" width="3.53" height="2.16" fill="#f2f2f2" />
<circle cx="247.40" cy="768.70" r="3.23" fill="#f8c468" />
<line x1="251.77" y1="768.70" x2="253.48" y2="768.70" stroke="#f8c468" stroke-width="1.14" />
<line x1="250.49" y1="771.79" x2="251.70" y2="773.00" stroke="#f8c468" stroke-width="1.14" />
<line x1="247.40" y1="773.07" x2="247.40" y2="774.78" stroke="#f8c468" stroke-width="1.14" />
<line x1="244.31" y1="771.79" x2="243.10" y2="773.00" stroke="#f8c468" stroke-width="1.14" />
<line x1="243.03" y1="768.70" x2="241.32" y2="768.70" stroke="#f8c468" stroke-width="1.14" />
<line x1="244.31" y1="765.61" x2="243.10" y2="764.40" stroke="#f8c468" stroke-width="1.14" />
<line x1="247.40" y1="764.33" x2="247.40" y2="762.62" stroke="#f8c468" stroke-width="1.14" />
<line x1="250.49" y1="765.61" x2="251.70" y2="764.40" stroke="#f8c468" stroke-width="1.14" />
<rect x="259.30" y="766.90" width="8.16" height="6.24" fill="#f8c468" />
<path d="M263.62 766.9v-1.92a2.496 2.496 0 0 1 4.992 0v1.44" fill="none" stroke="#f8c468" stroke-width="1.44" />
<rect x="262.76" y="768.82" width="1.34" height="2.50" fill="#3b4453" />
<rect x="278.50" y="762.90" width="6.50" height="3.50" fill="#f4f4f4" />
<rect x="276.00" y="766.10" width="11.20" height="6.00" fill="#e9ebeb" rx="0.8" />
<rect x="278.50" y="769.70" width="6.50" height="4.80" fill="#f4f4f4" />
<rect x="279.50" y="771.30" width="4.50" height="2.20" fill="#4da3ec" />
<rect x="278.00" y="769.30" width="7.50" height="0.80" fill="#3b4453" />
<rect x="293.70" y="763.50" width="9.80" height="10.40" fill="#74e8b0" stroke="#10141a" stroke-width="1.1" />
<text x="308.40" y="772.50" font-size="11.7" fill="#ececec" textLength="18.30" lengthAdjust="spacingAndGlyphs" >111</text>
<text x="337.70" y="772.50" font-size="11.7" fill="#ececec" textLength="50.60" lengthAdjust="spacingAndGlyphs" >CONTIN...</text>
<line x1="396.70" y1="768.90" x2="416.70" y2="768.90" stroke="#e4e4e4" stroke-width="1" />
<text x="422.30" y="772.50" font-size="11.7" fill="#ececec" textLength="32.00" lengthAdjust="spacingAndGlyphs" >Vorg...</text>
<text x="461.70" y="772.50" font-size="11.7" fill="#ececec" textLength="6.00" lengthAdjust="spacingAndGlyphs" >0</text>
<text x="512.30" y="772.50" font-size="11.7" fill="#ececec" textLength="43.70" lengthAdjust="spacingAndGlyphs" >7 Schw...</text>
<path d="M563.3 765.70v-2.5h2.5M569 763.20h2.5v2.5M571.5 769.70v2.5h-2.5M565.8 772.20h-2.5v-2.5" fill="none" stroke="#b4bac0" stroke-width="1" />
<rect x="565.30" y="765.40" width="4.20" height="4.00" fill="#6a7280" stroke="#c4c8cc" stroke-width="0.8" />
<circle cx="571.30" cy="771.90" r="1.36" fill="#e0954a" />
<line x1="573.14" y1="771.90" x2="573.86" y2="771.90" stroke="#e0954a" stroke-width="0.48" />
<line x1="572.60" y1="773.20" x2="573.11" y2="773.71" stroke="#e0954a" stroke-width="0.48" />
<line x1="571.30" y1="773.74" x2="571.30" y2="774.46" stroke="#e0954a" stroke-width="0.48" />
<line x1="570.00" y1="773.20" x2="569.49" y2="773.71" stroke="#e0954a" stroke-width="0.48" />
<line x1="569.46" y1="771.90" x2="568.74" y2="771.90" stroke="#e0954a" stroke-width="0.48" />
<line x1="570.00" y1="770.60" x2="569.49" y2="770.09" stroke="#e0954a" stroke-width="0.48" />
<line x1="571.30" y1="770.06" x2="571.30" y2="769.34" stroke="#e0954a" stroke-width="0.48" />
<line x1="572.60" y1="770.60" x2="573.11" y2="770.09" stroke="#e0954a" stroke-width="0.48" />
<path d="M136.7 788.73l4.8-5.2h7.8l-4.8 5.2z" fill="#6cb8f2" />
<text x="155.00" y="789.83" font-size="11.7" fill="#ececec" textLength="43.30" lengthAdjust="spacingAndGlyphs" >_Neubau</text>
<circle cx="230.50" cy="784.86" r="4.51" fill="#f8c468" />
<rect x="228.34" y="788.49" width="4.31" height="2.35" fill="#f8c468" />
<rect x="228.74" y="791.03" width="3.53" height="2.16" fill="#f2f2f2" />
<circle cx="247.40" cy="786.03" r="3.23" fill="#f8c468" />
<line x1="251.77" y1="786.03" x2="253.48" y2="786.03" stroke="#f8c468" stroke-width="1.14" />
<line x1="250.49" y1="789.12" x2="251.70" y2="790.33" stroke="#f8c468" stroke-width="1.14" />
<line x1="247.40" y1="790.40" x2="247.40" y2="792.11" stroke="#f8c468" stroke-width="1.14" />
<line x1="244.31" y1="789.12" x2="243.10" y2="790.33" stroke="#f8c468" stroke-width="1.14" />
<line x1="243.03" y1="786.03" x2="241.32" y2="786.03" stroke="#f8c468" stroke-width="1.14" />
<line x1="244.31" y1="782.94" x2="243.10" y2="781.73" stroke="#f8c468" stroke-width="1.14" />
<line x1="247.40" y1="781.66" x2="247.40" y2="779.95" stroke="#f8c468" stroke-width="1.14" />
<line x1="250.49" y1="782.94" x2="251.70" y2="781.73" stroke="#f8c468" stroke-width="1.14" />
<rect x="259.30" y="784.23" width="8.16" height="6.24" fill="#f8c468" />
<path d="M263.62 784.23v-1.92a2.496 2.496 0 0 1 4.992 0v1.44" fill="none" stroke="#f8c468" stroke-width="1.44" />
<rect x="262.76" y="786.15" width="1.34" height="2.50" fill="#3b4453" />
<rect x="278.50" y="780.23" width="6.50" height="3.50" fill="#f4f4f4" />
<rect x="276.00" y="783.43" width="11.20" height="6.00" fill="#e9ebeb" rx="0.8" />
<rect x="278.50" y="787.03" width="6.50" height="4.80" fill="#f4f4f4" />
<rect x="279.50" y="788.63" width="4.50" height="2.20" fill="#4da3ec" />
<rect x="278.00" y="786.63" width="7.50" height="0.80" fill="#3b4453" />
<rect x="293.70" y="780.83" width="9.80" height="10.40" fill="#f58a2c" stroke="#10141a" stroke-width="1.1" />
<text x="308.40" y="789.83" font-size="11.7" fill="#ececec" textLength="12.10" lengthAdjust="spacingAndGlyphs" >30</text>
<text x="337.70" y="789.83" font-size="11.7" fill="#ececec" textLength="50.60" lengthAdjust="spacingAndGlyphs" >CONTIN...</text>
<line x1="396.70" y1="786.23" x2="416.70" y2="786.23" stroke="#e4e4e4" stroke-width="1" />
<text x="422.30" y="789.83" font-size="11.7" fill="#ececec" textLength="32.00" lengthAdjust="spacingAndGlyphs" >Vorg...</text>
<text x="461.70" y="789.83" font-size="11.7" fill="#ececec" textLength="6.00" lengthAdjust="spacingAndGlyphs" >0</text>
<text x="512.30" y="789.83" font-size="11.7" fill="#ececec" textLength="26.70" lengthAdjust="spacingAndGlyphs" >1 Rot</text>
<path d="M563.3 783.03v-2.5h2.5M569 780.53h2.5v2.5M571.5 787.03v2.5h-2.5M565.8 789.53h-2.5v-2.5" fill="none" stroke="#b4bac0" stroke-width="1" />
<rect x="565.30" y="782.73" width="4.20" height="4.00" fill="#6a7280" stroke="#c4c8cc" stroke-width="0.8" />
<circle cx="571.30" cy="789.23" r="1.36" fill="#e0954a" />
<line x1="573.14" y1="789.23" x2="573.86" y2="789.23" stroke="#e0954a" stroke-width="0.48" />
<line x1="572.60" y1="790.53" x2="573.11" y2="791.04" stroke="#e0954a" stroke-width="0.48" />
<line x1="571.30" y1="791.07" x2="571.30" y2="791.79" stroke="#e0954a" stroke-width="0.48" />
<line x1="570.00" y1="790.53" x2="569.49" y2="791.04" stroke="#e0954a" stroke-width="0.48" />
<line x1="569.46" y1="789.23" x2="568.74" y2="789.23" stroke="#e0954a" stroke-width="0.48" />
<line x1="570.00" y1="787.93" x2="569.49" y2="787.42" stroke="#e0954a" stroke-width="0.48" />
<line x1="571.30" y1="787.39" x2="571.30" y2="786.67" stroke="#e0954a" stroke-width="0.48" />
<line x1="572.60" y1="787.93" x2="573.11" y2="787.42" stroke="#e0954a" stroke-width="0.48" />
<path d="M136.7 806.06l4.8-5.2h7.8l-4.8 5.2z" fill="#6cb8f2" />
<text x="155.00" y="807.16" font-size="11.7" fill="#ececec" textLength="62.30" lengthAdjust="spacingAndGlyphs" >_NeubauN...</text>
<circle cx="230.50" cy="802.19" r="4.51" fill="#f8c468" />
<rect x="228.34" y="805.82" width="4.31" height="2.35" fill="#f8c468" />
<rect x="228.74" y="808.36" width="3.53" height="2.16" fill="#f2f2f2" />
<circle cx="247.40" cy="803.36" r="3.23" fill="#f8c468" />
<line x1="251.77" y1="803.36" x2="253.48" y2="803.36" stroke="#f8c468" stroke-width="1.14" />
<line x1="250.49" y1="806.45" x2="251.70" y2="807.66" stroke="#f8c468" stroke-width="1.14" />
<line x1="247.40" y1="807.73" x2="247.40" y2="809.44" stroke="#f8c468" stroke-width="1.14" />
<line x1="244.31" y1="806.45" x2="243.10" y2="807.66" stroke="#f8c468" stroke-width="1.14" />
<line x1="243.03" y1="803.36" x2="241.32" y2="803.36" stroke="#f8c468" stroke-width="1.14" />
<line x1="244.31" y1="800.27" x2="243.10" y2="799.06" stroke="#f8c468" stroke-width="1.14" />
<line x1="247.40" y1="798.99" x2="247.40" y2="797.28" stroke="#f8c468" stroke-width="1.14" />
<line x1="250.49" y1="800.27" x2="251.70" y2="799.06" stroke="#f8c468" stroke-width="1.14" />
<rect x="259.30" y="801.56" width="8.16" height="6.24" fill="#f8c468" />
<path d="M263.62 801.56v-1.92a2.496 2.496 0 0 1 4.992 0v1.44" fill="none" stroke="#f8c468" stroke-width="1.44" />
<rect x="262.76" y="803.48" width="1.34" height="2.50" fill="#3b4453" />
<rect x="278.50" y="797.56" width="6.50" height="3.50" fill="#f4f4f4" />
<rect x="276.00" y="800.76" width="11.20" height="6.00" fill="#e9ebeb" rx="0.8" />
<rect x="278.50" y="804.36" width="6.50" height="4.80" fill="#f4f4f4" />
<rect x="279.50" y="805.96" width="4.50" height="2.20" fill="#4da3ec" />
<rect x="278.00" y="803.96" width="7.50" height="0.80" fill="#3b4453" />
<rect x="293.70" y="798.16" width="9.80" height="10.40" fill="#2b3140" stroke="#10141a" stroke-width="1.1" />
<text x="308.40" y="807.16" font-size="11.7" fill="#ececec" textLength="18.60" lengthAdjust="spacingAndGlyphs" >216</text>
<text x="337.70" y="807.16" font-size="11.7" fill="#ececec" textLength="50.60" lengthAdjust="spacingAndGlyphs" >CONTIN...</text>
<line x1="396.70" y1="803.56" x2="416.70" y2="803.56" stroke="#e4e4e4" stroke-width="1" />
<text x="422.30" y="807.16" font-size="11.7" fill="#ececec" textLength="32.00" lengthAdjust="spacingAndGlyphs" >Vorg...</text>
<text x="461.70" y="807.16" font-size="11.7" fill="#ececec" textLength="6.00" lengthAdjust="spacingAndGlyphs" >0</text>
<text x="512.30" y="807.16" font-size="11.7" fill="#ececec" textLength="41.00" lengthAdjust="spacingAndGlyphs" >6 Mag...</text>
<path d="M563.3 800.36v-2.5h2.5M569 797.86h2.5v2.5M571.5 804.36v2.5h-2.5M565.8 806.86h-2.5v-2.5" fill="none" stroke="#b4bac0" stroke-width="1" />
<rect x="565.30" y="800.06" width="4.20" height="4.00" fill="#6a7280" stroke="#c4c8cc" stroke-width="0.8" />
<circle cx="571.30" cy="806.56" r="1.36" fill="#e0954a" />
<line x1="573.14" y1="806.56" x2="573.86" y2="806.56" stroke="#e0954a" stroke-width="0.48" />
<line x1="572.60" y1="807.86" x2="573.11" y2="808.37" stroke="#e0954a" stroke-width="0.48" />
<line x1="571.30" y1="808.40" x2="571.30" y2="809.12" stroke="#e0954a" stroke-width="0.48" />
<line x1="570.00" y1="807.86" x2="569.49" y2="808.37" stroke="#e0954a" stroke-width="0.48" />
<line x1="569.46" y1="806.56" x2="568.74" y2="806.56" stroke="#e0954a" stroke-width="0.48" />
<line x1="570.00" y1="805.26" x2="569.49" y2="804.75" stroke="#e0954a" stroke-width="0.48" />
<line x1="571.30" y1="804.72" x2="571.30" y2="804.00" stroke="#e0954a" stroke-width="0.48" />
<line x1="572.60" y1="805.26" x2="573.11" y2="804.75" stroke="#e0954a" stroke-width="0.48" />
<path d="M136.7 823.39l4.8-5.2h7.8l-4.8 5.2z" fill="#6cb8f2" />
<text x="155.00" y="824.49" font-size="11.7" fill="#ececec" textLength="60.00" lengthAdjust="spacingAndGlyphs" >_NeubauV...</text>
<circle cx="230.50" cy="819.52" r="4.51" fill="#f8c468" />
<rect x="228.34" y="823.15" width="4.31" height="2.35" fill="#f8c468" />
<rect x="228.74" y="825.69" width="3.53" height="2.16" fill="#f2f2f2" />
<circle cx="247.40" cy="820.69" r="3.23" fill="#f8c468" />
<line x1="251.77" y1="820.69" x2="253.48" y2="820.69" stroke="#f8c468" stroke-width="1.14" />
<line x1="250.49" y1="823.78" x2="251.70" y2="824.99" stroke="#f8c468" stroke-width="1.14" />
<line x1="247.40" y1="825.06" x2="247.40" y2="826.77" stroke="#f8c468" stroke-width="1.14" />
<line x1="244.31" y1="823.78" x2="243.10" y2="824.99" stroke="#f8c468" stroke-width="1.14" />
<line x1="243.03" y1="820.69" x2="241.32" y2="820.69" stroke="#f8c468" stroke-width="1.14" />
<line x1="244.31" y1="817.60" x2="243.10" y2="816.39" stroke="#f8c468" stroke-width="1.14" />
<line x1="247.40" y1="816.32" x2="247.40" y2="814.61" stroke="#f8c468" stroke-width="1.14" />
<line x1="250.49" y1="817.60" x2="251.70" y2="816.39" stroke="#f8c468" stroke-width="1.14" />
<rect x="259.30" y="818.89" width="8.16" height="6.24" fill="#f8c468" />
<path d="M263.62 818.89v-1.92a2.496 2.496 0 0 1 4.992 0v1.44" fill="none" stroke="#f8c468" stroke-width="1.44" />
<rect x="262.76" y="820.81" width="1.34" height="2.50" fill="#3b4453" />
<rect x="278.50" y="814.89" width="6.50" height="3.50" fill="#f4f4f4" />
<rect x="276.00" y="818.09" width="11.20" height="6.00" fill="#e9ebeb" rx="0.8" />
<rect x="278.50" y="821.69" width="6.50" height="4.80" fill="#f4f4f4" />
<rect x="279.50" y="823.29" width="4.50" height="2.20" fill="#4da3ec" />
<rect x="278.00" y="821.29" width="7.50" height="0.80" fill="#3b4453" />
<rect x="293.70" y="815.49" width="9.80" height="10.40" fill="#1878ee" stroke="#10141a" stroke-width="1.1" />
<text x="308.40" y="824.49" font-size="11.7" fill="#ececec" textLength="18.60" lengthAdjust="spacingAndGlyphs" >150</text>
<text x="337.70" y="824.49" font-size="11.7" fill="#ececec" textLength="50.60" lengthAdjust="spacingAndGlyphs" >CONTIN...</text>
<line x1="396.70" y1="820.89" x2="416.70" y2="820.89" stroke="#e4e4e4" stroke-width="1" />
<text x="422.30" y="824.49" font-size="11.7" fill="#ececec" textLength="32.00" lengthAdjust="spacingAndGlyphs" >Vorg...</text>
<text x="461.70" y="824.49" font-size="11.7" fill="#ececec" textLength="6.00" lengthAdjust="spacingAndGlyphs" >0</text>
<text x="512.30" y="824.49" font-size="11.7" fill="#ececec" textLength="30.40" lengthAdjust="spacingAndGlyphs" >5 Blau</text>
<path d="M563.3 817.69v-2.5h2.5M569 815.19h2.5v2.5M571.5 821.69v2.5h-2.5M565.8 824.19h-2.5v-2.5" fill="none" stroke="#b4bac0" stroke-width="1" />
<rect x="565.30" y="817.39" width="4.20" height="4.00" fill="#6a7280" stroke="#c4c8cc" stroke-width="0.8" />
<circle cx="571.30" cy="823.89" r="1.36" fill="#e0954a" />
<line x1="573.14" y1="823.89" x2="573.86" y2="823.89" stroke="#e0954a" stroke-width="0.48" />
<line x1="572.60" y1="825.19" x2="573.11" y2="825.70" stroke="#e0954a" stroke-width="0.48" />
<line x1="571.30" y1="825.73" x2="571.30" y2="826.45" stroke="#e0954a" stroke-width="0.48" />
<line x1="570.00" y1="825.19" x2="569.49" y2="825.70" stroke="#e0954a" stroke-width="0.48" />
<line x1="569.46" y1="823.89" x2="568.74" y2="823.89" stroke="#e0954a" stroke-width="0.48" />
<line x1="570.00" y1="822.59" x2="569.49" y2="822.08" stroke="#e0954a" stroke-width="0.48" />
<line x1="571.30" y1="822.05" x2="571.30" y2="821.33" stroke="#e0954a" stroke-width="0.48" />
<line x1="572.60" y1="822.59" x2="573.11" y2="822.08" stroke="#e0954a" stroke-width="0.48" />
<path d="M136.7 840.72l4.8-5.2h7.8l-4.8 5.2z" fill="#6cb8f2" />
<text x="155.00" y="841.82" font-size="11.7" fill="#ececec" textLength="53.30" lengthAdjust="spacingAndGlyphs" >_Rueckbau</text>
<circle cx="230.50" cy="836.85" r="4.51" fill="#f8c468" />
<rect x="228.34" y="840.48" width="4.31" height="2.35" fill="#f8c468" />
<rect x="228.74" y="843.02" width="3.53" height="2.16" fill="#f2f2f2" />
<circle cx="247.40" cy="838.02" r="3.23" fill="#f8c468" />
<line x1="251.77" y1="838.02" x2="253.48" y2="838.02" stroke="#f8c468" stroke-width="1.14" />
<line x1="250.49" y1="841.11" x2="251.70" y2="842.32" stroke="#f8c468" stroke-width="1.14" />
<line x1="247.40" y1="842.39" x2="247.40" y2="844.10" stroke="#f8c468" stroke-width="1.14" />
<line x1="244.31" y1="841.11" x2="243.10" y2="842.32" stroke="#f8c468" stroke-width="1.14" />
<line x1="243.03" y1="838.02" x2="241.32" y2="838.02" stroke="#f8c468" stroke-width="1.14" />
<line x1="244.31" y1="834.93" x2="243.10" y2="833.72" stroke="#f8c468" stroke-width="1.14" />
<line x1="247.40" y1="833.65" x2="247.40" y2="831.94" stroke="#f8c468" stroke-width="1.14" />
<line x1="250.49" y1="834.93" x2="251.70" y2="833.72" stroke="#f8c468" stroke-width="1.14" />
<rect x="259.30" y="836.22" width="8.16" height="6.24" fill="#f8c468" />
<path d="M263.62 836.2199999999999v-1.92a2.496 2.496 0 0 1 4.992 0v1.44" fill="none" stroke="#f8c468" stroke-width="1.44" />
<rect x="262.76" y="838.14" width="1.34" height="2.50" fill="#3b4453" />
<rect x="278.50" y="832.22" width="6.50" height="3.50" fill="#f4f4f4" />
<rect x="276.00" y="835.42" width="11.20" height="6.00" fill="#e9ebeb" rx="0.8" />
<rect x="278.50" y="839.02" width="6.50" height="4.80" fill="#f4f4f4" />
<rect x="279.50" y="840.62" width="4.50" height="2.20" fill="#4da3ec" />
<rect x="278.00" y="838.62" width="7.50" height="0.80" fill="#3b4453" />
<rect x="293.70" y="832.82" width="9.80" height="10.40" fill="#ffee10" stroke="#10141a" stroke-width="1.1" />
<text x="308.40" y="841.82" font-size="11.7" fill="#ececec" textLength="12.10" lengthAdjust="spacingAndGlyphs" >50</text>
<text x="337.70" y="841.82" font-size="11.7" fill="#ececec" textLength="50.60" lengthAdjust="spacingAndGlyphs" >CONTIN...</text>
<line x1="396.70" y1="838.22" x2="416.70" y2="838.22" stroke="#e4e4e4" stroke-width="1" />
<text x="422.30" y="841.82" font-size="11.7" fill="#ececec" textLength="32.00" lengthAdjust="spacingAndGlyphs" >Vorg...</text>
<text x="461.70" y="841.82" font-size="11.7" fill="#ececec" textLength="6.00" lengthAdjust="spacingAndGlyphs" >0</text>
<text x="512.30" y="841.82" font-size="11.7" fill="#ececec" textLength="41.00" lengthAdjust="spacingAndGlyphs" >40 Gel...</text>
<path d="M563.3 835.02v-2.5h2.5M569 832.52h2.5v2.5M571.5 839.02v2.5h-2.5M565.8 841.52h-2.5v-2.5" fill="none" stroke="#b4bac0" stroke-width="1" />
<rect x="565.30" y="834.72" width="4.20" height="4.00" fill="#6a7280" stroke="#c4c8cc" stroke-width="0.8" />
<circle cx="571.30" cy="841.22" r="1.36" fill="#e0954a" />
<line x1="573.14" y1="841.22" x2="573.86" y2="841.22" stroke="#e0954a" stroke-width="0.48" />
<line x1="572.60" y1="842.52" x2="573.11" y2="843.03" stroke="#e0954a" stroke-width="0.48" />
<line x1="571.30" y1="843.06" x2="571.30" y2="843.78" stroke="#e0954a" stroke-width="0.48" />
<line x1="570.00" y1="842.52" x2="569.49" y2="843.03" stroke="#e0954a" stroke-width="0.48" />
<line x1="569.46" y1="841.22" x2="568.74" y2="841.22" stroke="#e0954a" stroke-width="0.48" />
<line x1="570.00" y1="839.92" x2="569.49" y2="839.41" stroke="#e0954a" stroke-width="0.48" />
<line x1="571.30" y1="839.38" x2="571.30" y2="838.66" stroke="#e0954a" stroke-width="0.48" />
<line x1="572.60" y1="839.92" x2="573.11" y2="839.41" stroke="#e0954a" stroke-width="0.48" />
<path d="M136.7 858.05l4.8-5.2h7.8l-4.8 5.2z" fill="#6cb8f2" />
<text x="155.00" y="859.15" font-size="11.7" fill="#ececec" textLength="55.70" lengthAdjust="spacingAndGlyphs" >_Rueckba...</text>
<circle cx="230.50" cy="854.18" r="4.51" fill="#f8c468" />
<rect x="228.34" y="857.81" width="4.31" height="2.35" fill="#f8c468" />
<rect x="228.74" y="860.35" width="3.53" height="2.16" fill="#f2f2f2" />
<circle cx="247.40" cy="855.35" r="3.23" fill="#f8c468" />
<line x1="251.77" y1="855.35" x2="253.48" y2="855.35" stroke="#f8c468" stroke-width="1.14" />
<line x1="250.49" y1="858.44" x2="251.70" y2="859.65" stroke="#f8c468" stroke-width="1.14" />
<line x1="247.40" y1="859.72" x2="247.40" y2="861.43" stroke="#f8c468" stroke-width="1.14" />
<line x1="244.31" y1="858.44" x2="243.10" y2="859.65" stroke="#f8c468" stroke-width="1.14" />
<line x1="243.03" y1="855.35" x2="241.32" y2="855.35" stroke="#f8c468" stroke-width="1.14" />
<line x1="244.31" y1="852.26" x2="243.10" y2="851.05" stroke="#f8c468" stroke-width="1.14" />
<line x1="247.40" y1="850.98" x2="247.40" y2="849.27" stroke="#f8c468" stroke-width="1.14" />
<line x1="250.49" y1="852.26" x2="251.70" y2="851.05" stroke="#f8c468" stroke-width="1.14" />
<rect x="259.30" y="853.55" width="8.16" height="6.24" fill="#f8c468" />
<path d="M263.62 853.55v-1.92a2.496 2.496 0 0 1 4.992 0v1.44" fill="none" stroke="#f8c468" stroke-width="1.44" />
<rect x="262.76" y="855.47" width="1.34" height="2.50" fill="#3b4453" />
<rect x="278.50" y="849.55" width="6.50" height="3.50" fill="#f4f4f4" />
<rect x="276.00" y="852.75" width="11.20" height="6.00" fill="#e9ebeb" rx="0.8" />
<rect x="278.50" y="856.35" width="6.50" height="4.80" fill="#f4f4f4" />
<rect x="279.50" y="857.95" width="4.50" height="2.20" fill="#4da3ec" />
<rect x="278.00" y="855.95" width="7.50" height="0.80" fill="#3b4453" />
<rect x="293.70" y="850.15" width="9.80" height="10.40" fill="#6a4a2a" stroke="#10141a" stroke-width="1.1" />
<text x="308.40" y="859.15" font-size="11.7" fill="#ececec" textLength="12.10" lengthAdjust="spacingAndGlyphs" >56</text>
<text x="337.70" y="859.15" font-size="11.7" fill="#ececec" textLength="50.60" lengthAdjust="spacingAndGlyphs" >CONTIN...</text>
<line x1="396.70" y1="855.55" x2="416.70" y2="855.55" stroke="#e4e4e4" stroke-width="1" />
<text x="422.30" y="859.15" font-size="11.7" fill="#ececec" textLength="32.00" lengthAdjust="spacingAndGlyphs" >Vorg...</text>
<text x="461.70" y="859.15" font-size="11.7" fill="#ececec" textLength="6.00" lengthAdjust="spacingAndGlyphs" >0</text>
<text x="512.30" y="859.15" font-size="11.7" fill="#ececec" textLength="12.70" lengthAdjust="spacingAndGlyphs" >56</text>
<path d="M563.3 852.35v-2.5h2.5M569 849.85h2.5v2.5M571.5 856.35v2.5h-2.5M565.8 858.85h-2.5v-2.5" fill="none" stroke="#b4bac0" stroke-width="1" />
<rect x="565.30" y="852.05" width="4.20" height="4.00" fill="#6a7280" stroke="#c4c8cc" stroke-width="0.8" />
<circle cx="571.30" cy="858.55" r="1.36" fill="#e0954a" />
<line x1="573.14" y1="858.55" x2="573.86" y2="858.55" stroke="#e0954a" stroke-width="0.48" />
<line x1="572.60" y1="859.85" x2="573.11" y2="860.36" stroke="#e0954a" stroke-width="0.48" />
<line x1="571.30" y1="860.39" x2="571.30" y2="861.11" stroke="#e0954a" stroke-width="0.48" />
<line x1="570.00" y1="859.85" x2="569.49" y2="860.36" stroke="#e0954a" stroke-width="0.48" />
<line x1="569.46" y1="858.55" x2="568.74" y2="858.55" stroke="#e0954a" stroke-width="0.48" />
<line x1="570.00" y1="857.25" x2="569.49" y2="856.74" stroke="#e0954a" stroke-width="0.48" />
<line x1="571.30" y1="856.71" x2="571.30" y2="855.99" stroke="#e0954a" stroke-width="0.48" />
<line x1="572.60" y1="857.25" x2="573.11" y2="856.74" stroke="#e0954a" stroke-width="0.48" />
<path d="M136.7 875.38l4.8-5.2h7.8l-4.8 5.2z" fill="#6cb8f2" />
<text x="155.00" y="876.48" font-size="11.7" fill="#ececec" textLength="61.70" lengthAdjust="spacingAndGlyphs" >_ScheinNe...</text>
<circle cx="230.50" cy="871.51" r="4.51" fill="#f8c468" />
<rect x="228.34" y="875.14" width="4.31" height="2.35" fill="#f8c468" />
<rect x="228.74" y="877.68" width="3.53" height="2.16" fill="#f2f2f2" />
<circle cx="247.40" cy="872.68" r="3.23" fill="#f8c468" />
<line x1="251.77" y1="872.68" x2="253.48" y2="872.68" stroke="#f8c468" stroke-width="1.14" />
<line x1="250.49" y1="875.77" x2="251.70" y2="876.98" stroke="#f8c468" stroke-width="1.14" />
<line x1="247.40" y1="877.05" x2="247.40" y2="878.76" stroke="#f8c468" stroke-width="1.14" />
<line x1="244.31" y1="875.77" x2="243.10" y2="876.98" stroke="#f8c468" stroke-width="1.14" />
<line x1="243.03" y1="872.68" x2="241.32" y2="872.68" stroke="#f8c468" stroke-width="1.14" />
<line x1="244.31" y1="869.59" x2="243.10" y2="868.38" stroke="#f8c468" stroke-width="1.14" />
<line x1="247.40" y1="868.31" x2="247.40" y2="866.60" stroke="#f8c468" stroke-width="1.14" />
<line x1="250.49" y1="869.59" x2="251.70" y2="868.38" stroke="#f8c468" stroke-width="1.14" />
<rect x="259.30" y="870.88" width="8.16" height="6.24" fill="#f8c468" />
<path d="M263.62 870.88v-1.92a2.496 2.496 0 0 1 4.992 0v1.44" fill="none" stroke="#f8c468" stroke-width="1.44" />
<rect x="262.76" y="872.80" width="1.34" height="2.50" fill="#3b4453" />
<rect x="278.50" y="866.88" width="6.50" height="3.50" fill="#f4f4f4" />
<rect x="276.00" y="870.08" width="11.20" height="6.00" fill="#e9ebeb" rx="0.8" />
<rect x="278.50" y="873.68" width="6.50" height="4.80" fill="#f4f4f4" />
<rect x="279.50" y="875.28" width="4.50" height="2.20" fill="#4da3ec" />
<rect x="278.00" y="873.28" width="7.50" height="0.80" fill="#3b4453" />
<rect x="293.70" y="867.48" width="9.80" height="10.40" fill="#3f8a60" stroke="#10141a" stroke-width="1.1" />
<text x="308.40" y="876.48" font-size="11.7" fill="#ececec" textLength="18.60" lengthAdjust="spacingAndGlyphs" >112</text>
<text x="337.70" y="876.48" font-size="11.7" fill="#ececec" textLength="50.60" lengthAdjust="spacingAndGlyphs" >CONTIN...</text>
<line x1="396.70" y1="872.88" x2="416.70" y2="872.88" stroke="#e4e4e4" stroke-width="1" />
<text x="422.30" y="876.48" font-size="11.7" fill="#ececec" textLength="32.00" lengthAdjust="spacingAndGlyphs" >Vorg...</text>
<text x="461.70" y="876.48" font-size="11.7" fill="#ececec" textLength="6.00" lengthAdjust="spacingAndGlyphs" >0</text>
<text x="512.30" y="876.48" font-size="11.7" fill="#ececec" textLength="43.70" lengthAdjust="spacingAndGlyphs" >7 Schw...</text>
<path d="M563.3 869.68v-2.5h2.5M569 867.18h2.5v2.5M571.5 873.68v2.5h-2.5M565.8 876.18h-2.5v-2.5" fill="none" stroke="#b4bac0" stroke-width="1" />
<rect x="565.30" y="869.38" width="4.20" height="4.00" fill="#6a7280" stroke="#c4c8cc" stroke-width="0.8" />
<circle cx="571.30" cy="875.88" r="1.36" fill="#e0954a" />
<line x1="573.14" y1="875.88" x2="573.86" y2="875.88" stroke="#e0954a" stroke-width="0.48" />
<line x1="572.60" y1="877.18" x2="573.11" y2="877.69" stroke="#e0954a" stroke-width="0.48" />
<line x1="571.30" y1="877.72" x2="571.30" y2="878.44" stroke="#e0954a" stroke-width="0.48" />
<line x1="570.00" y1="877.18" x2="569.49" y2="877.69" stroke="#e0954a" stroke-width="0.48" />
<line x1="569.46" y1="875.88" x2="568.74" y2="875.88" stroke="#e0954a" stroke-width="0.48" />
<line x1="570.00" y1="874.58" x2="569.49" y2="874.07" stroke="#e0954a" stroke-width="0.48" />
<line x1="571.30" y1="874.04" x2="571.30" y2="873.32" stroke="#e0954a" stroke-width="0.48" />
<line x1="572.60" y1="874.58" x2="573.11" y2="874.07" stroke="#e0954a" stroke-width="0.48" />
<path d="M136.7 892.71l4.8-5.2h7.8l-4.8 5.2z" fill="#6cb8f2" />
<text x="155.00" y="893.81" font-size="11.7" fill="#ececec" textLength="61.70" lengthAdjust="spacingAndGlyphs" >_ScheinRu...</text>
<circle cx="230.50" cy="888.84" r="4.51" fill="#f8c468" />
<rect x="228.34" y="892.47" width="4.31" height="2.35" fill="#f8c468" />
<rect x="228.74" y="895.01" width="3.53" height="2.16" fill="#f2f2f2" />
<circle cx="247.40" cy="890.01" r="3.23" fill="#f8c468" />
<line x1="251.77" y1="890.01" x2="253.48" y2="890.01" stroke="#f8c468" stroke-width="1.14" />
<line x1="250.49" y1="893.10" x2="251.70" y2="894.31" stroke="#f8c468" stroke-width="1.14" />
<line x1="247.40" y1="894.38" x2="247.40" y2="896.09" stroke="#f8c468" stroke-width="1.14" />
<line x1="244.31" y1="893.10" x2="243.10" y2="894.31" stroke="#f8c468" stroke-width="1.14" />
<line x1="243.03" y1="890.01" x2="241.32" y2="890.01" stroke="#f8c468" stroke-width="1.14" />
<line x1="244.31" y1="886.92" x2="243.10" y2="885.71" stroke="#f8c468" stroke-width="1.14" />
<line x1="247.40" y1="885.64" x2="247.40" y2="883.93" stroke="#f8c468" stroke-width="1.14" />
<line x1="250.49" y1="886.92" x2="251.70" y2="885.71" stroke="#f8c468" stroke-width="1.14" />
<rect x="259.30" y="888.21" width="8.16" height="6.24" fill="#f8c468" />
<path d="M263.62 888.2099999999999v-1.92a2.496 2.496 0 0 1 4.992 0v1.44" fill="none" stroke="#f8c468" stroke-width="1.44" />
<rect x="262.76" y="890.13" width="1.34" height="2.50" fill="#3b4453" />
<rect x="278.50" y="884.21" width="6.50" height="3.50" fill="#f4f4f4" />
<rect x="276.00" y="887.41" width="11.20" height="6.00" fill="#e9ebeb" rx="0.8" />
<rect x="278.50" y="891.01" width="6.50" height="4.80" fill="#f4f4f4" />
<rect x="279.50" y="892.61" width="4.50" height="2.20" fill="#4da3ec" />
<rect x="278.00" y="890.61" width="7.50" height="0.80" fill="#3b4453" />
<rect x="293.70" y="884.81" width="9.80" height="10.40" fill="#c07c44" stroke="#10141a" stroke-width="1.1" />
<text x="308.40" y="893.81" font-size="11.7" fill="#ececec" textLength="12.10" lengthAdjust="spacingAndGlyphs" >52</text>
<text x="337.70" y="893.81" font-size="11.7" fill="#ececec" textLength="50.60" lengthAdjust="spacingAndGlyphs" >CONTIN...</text>
<line x1="396.70" y1="890.21" x2="416.70" y2="890.21" stroke="#e4e4e4" stroke-width="1" />
<text x="422.30" y="893.81" font-size="11.7" fill="#ececec" textLength="32.00" lengthAdjust="spacingAndGlyphs" >Vorg...</text>
<text x="461.70" y="893.81" font-size="11.7" fill="#ececec" textLength="6.00" lengthAdjust="spacingAndGlyphs" >0</text>
<text x="512.30" y="893.81" font-size="11.7" fill="#ececec" textLength="12.70" lengthAdjust="spacingAndGlyphs" >56</text>
<path d="M563.3 887.01v-2.5h2.5M569 884.51h2.5v2.5M571.5 891.01v2.5h-2.5M565.8 893.51h-2.5v-2.5" fill="none" stroke="#b4bac0" stroke-width="1" />
<rect x="565.30" y="886.71" width="4.20" height="4.00" fill="#6a7280" stroke="#c4c8cc" stroke-width="0.8" />
<circle cx="571.30" cy="893.21" r="1.36" fill="#e0954a" />
<line x1="573.14" y1="893.21" x2="573.86" y2="893.21" stroke="#e0954a" stroke-width="0.48" />
<line x1="572.60" y1="894.51" x2="573.11" y2="895.02" stroke="#e0954a" stroke-width="0.48" />
<line x1="571.30" y1="895.05" x2="571.30" y2="895.77" stroke="#e0954a" stroke-width="0.48" />
<line x1="570.00" y1="894.51" x2="569.49" y2="895.02" stroke="#e0954a" stroke-width="0.48" />
<line x1="569.46" y1="893.21" x2="568.74" y2="893.21" stroke="#e0954a" stroke-width="0.48" />
<line x1="570.00" y1="891.91" x2="569.49" y2="891.40" stroke="#e0954a" stroke-width="0.48" />
<line x1="571.30" y1="891.37" x2="571.30" y2="890.65" stroke="#e0954a" stroke-width="0.48" />
<line x1="572.60" y1="891.91" x2="573.11" y2="891.40" stroke="#e0954a" stroke-width="0.48" />
<path d="M136.7 910.04l4.8-5.2h7.8l-4.8 5.2z" fill="#6cb8f2" />
<text x="155.00" y="911.14" font-size="11.7" fill="#ececec" textLength="39.70" lengthAdjust="spacingAndGlyphs" >_Umbau</text>
<circle cx="230.50" cy="906.17" r="4.51" fill="#f8c468" />
<rect x="228.34" y="909.80" width="4.31" height="2.35" fill="#f8c468" />
<rect x="228.74" y="912.34" width="3.53" height="2.16" fill="#f2f2f2" />
<circle cx="247.40" cy="907.34" r="3.23" fill="#f8c468" />
<line x1="251.77" y1="907.34" x2="253.48" y2="907.34" stroke="#f8c468" stroke-width="1.14" />
<line x1="250.49" y1="910.43" x2="251.70" y2="911.64" stroke="#f8c468" stroke-width="1.14" />
<line x1="247.40" y1="911.71" x2="247.40" y2="913.42" stroke="#f8c468" stroke-width="1.14" />
<line x1="244.31" y1="910.43" x2="243.10" y2="911.64" stroke="#f8c468" stroke-width="1.14" />
<line x1="243.03" y1="907.34" x2="241.32" y2="907.34" stroke="#f8c468" stroke-width="1.14" />
<line x1="244.31" y1="904.25" x2="243.10" y2="903.04" stroke="#f8c468" stroke-width="1.14" />
<line x1="247.40" y1="902.97" x2="247.40" y2="901.26" stroke="#f8c468" stroke-width="1.14" />
<line x1="250.49" y1="904.25" x2="251.70" y2="903.04" stroke="#f8c468" stroke-width="1.14" />
<rect x="259.30" y="905.54" width="8.16" height="6.24" fill="#f8c468" />
<path d="M263.62 905.54v-1.92a2.496 2.496 0 0 1 4.992 0v1.44" fill="none" stroke="#f8c468" stroke-width="1.44" />
<rect x="262.76" y="907.46" width="1.34" height="2.50" fill="#3b4453" />
<rect x="278.50" y="901.54" width="6.50" height="3.50" fill="#f4f4f4" />
<rect x="276.00" y="904.74" width="11.20" height="6.00" fill="#e9ebeb" rx="0.8" />
<rect x="278.50" y="908.34" width="6.50" height="4.80" fill="#f4f4f4" />
<rect x="279.50" y="909.94" width="4.50" height="2.20" fill="#4da3ec" />
<rect x="278.00" y="907.94" width="7.50" height="0.80" fill="#3b4453" />
<rect x="293.70" y="902.14" width="9.80" height="10.40" fill="#f010f0" stroke="#10141a" stroke-width="1.1" />
<text x="308.40" y="911.14" font-size="11.7" fill="#ececec" textLength="18.60" lengthAdjust="spacingAndGlyphs" >210</text>
<text x="337.70" y="911.14" font-size="11.7" fill="#ececec" textLength="50.60" lengthAdjust="spacingAndGlyphs" >CONTIN...</text>
<line x1="396.70" y1="907.54" x2="416.70" y2="907.54" stroke="#e4e4e4" stroke-width="1" />
<text x="422.30" y="911.14" font-size="11.7" fill="#ececec" textLength="32.00" lengthAdjust="spacingAndGlyphs" >Vorg...</text>
<text x="461.70" y="911.14" font-size="11.7" fill="#ececec" textLength="6.00" lengthAdjust="spacingAndGlyphs" >0</text>
<text x="512.30" y="911.14" font-size="11.7" fill="#ececec" textLength="37.70" lengthAdjust="spacingAndGlyphs" >DBGis...</text>
<path d="M563.3 904.34v-2.5h2.5M569 901.84h2.5v2.5M571.5 908.34v2.5h-2.5M565.8 910.84h-2.5v-2.5" fill="none" stroke="#b4bac0" stroke-width="1" />
<rect x="565.30" y="904.04" width="4.20" height="4.00" fill="#6a7280" stroke="#c4c8cc" stroke-width="0.8" />
<circle cx="571.30" cy="910.54" r="1.36" fill="#e0954a" />
<line x1="573.14" y1="910.54" x2="573.86" y2="910.54" stroke="#e0954a" stroke-width="0.48" />
<line x1="572.60" y1="911.84" x2="573.11" y2="912.35" stroke="#e0954a" stroke-width="0.48" />
<line x1="571.30" y1="912.38" x2="571.30" y2="913.10" stroke="#e0954a" stroke-width="0.48" />
<line x1="570.00" y1="911.84" x2="569.49" y2="912.35" stroke="#e0954a" stroke-width="0.48" />
<line x1="569.46" y1="910.54" x2="568.74" y2="910.54" stroke="#e0954a" stroke-width="0.48" />
<line x1="570.00" y1="909.24" x2="569.49" y2="908.73" stroke="#e0954a" stroke-width="0.48" />
<line x1="571.30" y1="908.70" x2="571.30" y2="907.98" stroke="#e0954a" stroke-width="0.48" />
<line x1="572.60" y1="909.24" x2="573.11" y2="908.73" stroke="#e0954a" stroke-width="0.48" />
<path d="M136.7 927.37l4.8-5.2h7.8l-4.8 5.2z" fill="#6cb8f2" />
<text x="155.00" y="928.47" font-size="11.7" fill="#ececec" textLength="58.30" lengthAdjust="spacingAndGlyphs" >_UmbauN...</text>
<circle cx="230.50" cy="923.50" r="4.51" fill="#f8c468" />
<rect x="228.34" y="927.13" width="4.31" height="2.35" fill="#f8c468" />
<rect x="228.74" y="929.67" width="3.53" height="2.16" fill="#f2f2f2" />
<circle cx="247.40" cy="924.67" r="3.23" fill="#f8c468" />
<line x1="251.77" y1="924.67" x2="253.48" y2="924.67" stroke="#f8c468" stroke-width="1.14" />
<line x1="250.49" y1="927.76" x2="251.70" y2="928.97" stroke="#f8c468" stroke-width="1.14" />
<line x1="247.40" y1="929.04" x2="247.40" y2="930.75" stroke="#f8c468" stroke-width="1.14" />
<line x1="244.31" y1="927.76" x2="243.10" y2="928.97" stroke="#f8c468" stroke-width="1.14" />
<line x1="243.03" y1="924.67" x2="241.32" y2="924.67" stroke="#f8c468" stroke-width="1.14" />
<line x1="244.31" y1="921.58" x2="243.10" y2="920.37" stroke="#f8c468" stroke-width="1.14" />
<line x1="247.40" y1="920.30" x2="247.40" y2="918.59" stroke="#f8c468" stroke-width="1.14" />
<line x1="250.49" y1="921.58" x2="251.70" y2="920.37" stroke="#f8c468" stroke-width="1.14" />
<rect x="259.30" y="922.87" width="8.16" height="6.24" fill="#f8c468" />
<path d="M263.62 922.87v-1.92a2.496 2.496 0 0 1 4.992 0v1.44" fill="none" stroke="#f8c468" stroke-width="1.44" />
<rect x="262.76" y="924.79" width="1.34" height="2.50" fill="#3b4453" />
<rect x="278.50" y="918.87" width="6.50" height="3.50" fill="#f4f4f4" />
<rect x="276.00" y="922.07" width="11.20" height="6.00" fill="#e9ebeb" rx="0.8" />
<rect x="278.50" y="925.67" width="6.50" height="4.80" fill="#f4f4f4" />
<rect x="279.50" y="927.27" width="4.50" height="2.20" fill="#4da3ec" />
<rect x="278.00" y="925.27" width="7.50" height="0.80" fill="#3b4453" />
<circle cx="285.50" cy="928.17" r="2.80" fill="#f07a28" />
<line x1="284.00" y1="928.17" x2="287.00" y2="928.17" stroke="#fff" stroke-width="1" />
<rect x="293.70" y="919.47" width="9.80" height="10.40" fill="#ff84f0" stroke="#10141a" stroke-width="1.1" />
<text x="308.40" y="928.47" font-size="11.7" fill="#ececec" textLength="18.60" lengthAdjust="spacingAndGlyphs" >211</text>
<text x="337.70" y="928.47" font-size="11.7" fill="#ececec" textLength="50.60" lengthAdjust="spacingAndGlyphs" >CONTIN...</text>
<line x1="396.70" y1="924.87" x2="416.70" y2="924.87" stroke="#e4e4e4" stroke-width="1" />
<text x="422.30" y="928.47" font-size="11.7" fill="#ececec" textLength="32.00" lengthAdjust="spacingAndGlyphs" >Vorg...</text>
<text x="461.70" y="928.47" font-size="11.7" fill="#ececec" textLength="6.00" lengthAdjust="spacingAndGlyphs" >0</text>
<text x="512.30" y="928.47" font-size="11.7" fill="#ececec" textLength="36.00" lengthAdjust="spacingAndGlyphs" >Normal</text>
<path d="M563.3 921.67v-2.5h2.5M569 919.17h2.5v2.5M571.5 925.67v2.5h-2.5M565.8 928.17h-2.5v-2.5" fill="none" stroke="#b4bac0" stroke-width="1" />
<rect x="565.30" y="921.37" width="4.20" height="4.00" fill="#6a7280" stroke="#c4c8cc" stroke-width="0.8" />
<circle cx="571.30" cy="927.87" r="1.36" fill="#e0954a" />
<line x1="573.14" y1="927.87" x2="573.86" y2="927.87" stroke="#e0954a" stroke-width="0.48" />
<line x1="572.60" y1="929.17" x2="573.11" y2="929.68" stroke="#e0954a" stroke-width="0.48" />
<line x1="571.30" y1="929.71" x2="571.30" y2="930.43" stroke="#e0954a" stroke-width="0.48" />
<line x1="570.00" y1="929.17" x2="569.49" y2="929.68" stroke="#e0954a" stroke-width="0.48" />
<line x1="569.46" y1="927.87" x2="568.74" y2="927.87" stroke="#e0954a" stroke-width="0.48" />
<line x1="570.00" y1="926.57" x2="569.49" y2="926.06" stroke="#e0954a" stroke-width="0.48" />
<line x1="571.30" y1="926.03" x2="571.30" y2="925.31" stroke="#e0954a" stroke-width="0.48" />
<line x1="572.60" y1="926.57" x2="573.11" y2="926.06" stroke="#e0954a" stroke-width="0.48" />
<rect x="1780.00" y="738.30" width="16.70" height="197.70" fill="#f0f0f0" />
<rect x="1781.00" y="755.00" width="14.70" height="51.70" fill="#c9cbcd" />
<path d="M1785 748l3.5-3.5 3.5 3.5" fill="none" stroke="#4a4f58" stroke-width="1.8" />
<path d="M1785 925.5l3.5 3.5 3.5-3.5" fill="none" stroke="#4a4f58" stroke-width="1.8" />
<rect x="1680.00" y="695.00" width="116.70" height="14.50" fill="#4b5870" />
<text x="1680.70" y="706.00" font-size="11.5" fill="#e0e2e4" textLength="86.00" lengthAdjust="spacingAndGlyphs" >Suche nach Layer</text>
<circle cx="1788.20" cy="700.70" r="3.60" fill="none" stroke="#e4e4e4" stroke-width="1.3" />
<line x1="1791.00" y1="703.50" x2="1795.00" y2="707.50" stroke="#d9b38a" stroke-width="1.6" />
<path d="M1731.5 727a6.5 6.5 0 0 1 11.5-4" fill="none" stroke="#52d090" stroke-width="2.2" />
<path d="M1744.5 720v5.5h-5.5z" fill="#52d090" />
<path d="M1744.5 727a6.5 6.5 0 0 1-11.5 4" fill="none" stroke="#52d090" stroke-width="2.2" />
<path d="M1731.5 734v-5.5h5.5z" fill="#52d090" />
<rect x="1753.00" y="721.00" width="8.50" height="8.50" fill="#c4c8ca" />
<path d="M1753 735l4.5-4.5h10l-4.5 4.5z" fill="#8e969e" />
<path d="M1787.95 725.79 L1787.95 728.81 L1785.70 729.44 L1785.69 729.47 L1786.83 731.50 L1784.70 733.63 L1782.67 732.49 L1782.64 732.50 L1782.01 734.75 L1778.99 734.75 L1778.36 732.50 L1778.33 732.49 L1776.30 733.63 L1774.17 731.50 L1775.31 729.47 L1775.30 729.44 L1773.05 728.81 L1773.05 725.79 L1775.30 725.16 L1775.31 725.13 L1774.17 723.10 L1776.30 720.97 L1778.33 722.11 L1778.36 722.10 L1778.99 719.85 L1782.01 719.85 L1782.64 722.10 L1782.67 722.11 L1784.70 720.97 L1786.83 723.10 L1785.69 725.13 L1785.70 725.16z" fill="#f0f0f0" />
<circle cx="1780.50" cy="727.30" r="2.51" fill="#3b4453" />
<text x="46.00" y="963.40" font-size="11.7" fill="#ececec" textLength="252.30" lengthAdjust="spacingAndGlyphs" >OLACAD: 32 Layer angezeigt von 167 Gesamtlayern</text>
<path d="M12 969.5h58l-5 15c-.8 2.5-2 3.5-4.5 3.5H21.5c-2.5 0-3.7-1-4.5-3.5z" fill="#3b4453" />
<text x="25.00" y="981.80" font-size="11.7" fill="#ffffff" font-weight="bold" textLength="35.00" lengthAdjust="spacingAndGlyphs" >Modell</text>
<path d="M72 971h58l-4.5 13.5c-.8 2.5-2 3.5-4.5 3.5H81c-2.5 0-3.7-1-4.5-3.5z" fill="url(#chk)" />
<text x="81.70" y="981.80" font-size="11.7" fill="#c4c8cc" textLength="38.30" lengthAdjust="spacingAndGlyphs" >Layout1</text>
<path d="M134 971h23l-4.5 13.5c-.8 2.5-2 3.5-4.5 3.5h-5c-2.5 0-3.7-1-4.5-3.5z" fill="url(#chk)" />
<path d="M146 974.5v7.5M142.2 978.2h7.6" fill="none" stroke="#c4c8cc" stroke-width="1.4" />
<rect x="1182.80" y="971.00" width="49.40" height="23.00" fill="#3a4352" />
<rect x="1234.90" y="971.00" width="60.10" height="23.00" fill="#3a4352" />
<rect x="1298.00" y="971.00" width="158.60" height="23.00" fill="#3a4352" />
<rect x="1459.40" y="971.00" width="99.70" height="23.00" fill="#3a4352" />
<rect x="1561.80" y="971.00" width="37.00" height="23.00" fill="#3a4352" />
<rect x="1600.00" y="971.00" width="22.80" height="23.00" fill="#3a4352" />
<rect x="1625.40" y="971.00" width="22.60" height="23.00" fill="#3a4352" />
<rect x="1650.70" y="971.00" width="96.50" height="23.00" fill="#3a4352" />
<rect x="1749.90" y="971.00" width="45.70" height="23.00" fill="#3a4352" />
<text x="1186.00" y="986.80" font-size="11.7" fill="#f2f2f2" textLength="42.70" lengthAdjust="spacingAndGlyphs" >MODELL</text>
<path d="M1241 975v15M1245.5 975v15M1250 975v15M1238 978h15M1238 982.5h15M1238 987h15" fill="none" stroke="#dcdedf" stroke-width="1.1" />
<rect x="1262.50" y="976.50" width="2.00" height="2.00" fill="#dcdedf" />
<rect x="1267.80" y="976.50" width="2.00" height="2.00" fill="#dcdedf" />
<rect x="1273.10" y="976.50" width="2.00" height="2.00" fill="#dcdedf" />
<rect x="1262.50" y="981.80" width="2.00" height="2.00" fill="#dcdedf" />
<rect x="1267.80" y="981.80" width="2.00" height="2.00" fill="#dcdedf" />
<rect x="1273.10" y="981.80" width="2.00" height="2.00" fill="#dcdedf" />
<rect x="1262.50" y="987.10" width="2.00" height="2.00" fill="#dcdedf" />
<rect x="1267.80" y="987.10" width="2.00" height="2.00" fill="#dcdedf" />
<rect x="1273.10" y="987.10" width="2.00" height="2.00" fill="#dcdedf" />
<path d="M1284.50 980.80h6l-3.00 3.4z" fill="#d4d6d8" />
<path d="M1302 975v15h14" fill="none" stroke="#dcdedf" stroke-width="1.4" />
<path d="M1302 985.5h4.5v4.5" fill="none" stroke="#dcdedf" stroke-width="1" />
<circle cx="1330.00" cy="983.00" r="6.00" fill="none" stroke="#dcdedf" stroke-width="1.4" />
<path d="M1330 983h8M1330 983l7-7" fill="none" stroke="#dcdedf" stroke-width="1.2" />
<path d="M1347.50 980.80h6l-3.00 3.4z" fill="#d4d6d8" />
<line x1="1369.00" y1="975.00" x2="1369.00" y2="990.00" stroke="#3fc878" stroke-width="1.4" />
<line x1="1363.00" y1="976.00" x2="1375.00" y2="989.50" stroke="#d08050" stroke-width="1.3" />
<circle cx="1369.00" cy="982.30" r="1.20" fill="#e8e8e8" />
<path d="M1385.00 980.80h6l-3.00 3.4z" fill="#d4d6d8" />
<rect x="1397.20" y="972.00" width="20.80" height="21.20" fill="#4a7fc6" />
<rect x="1420.10" y="972.00" width="20.70" height="21.20" fill="#4a7fc6" />
<rect x="1460.10" y="972.00" width="21.00" height="21.20" fill="#4a7fc6" />
<path d="M1400 989l14-13" fill="none" stroke="#f0f0f0" stroke-width="1.5" />
<rect x="1404.00" y="980.50" width="3.50" height="3.50" fill="#f0f0f0" />
<path d="M1400 990.5h14" fill="none" stroke="#f0f0f0" stroke-width="1" stroke-dasharray="1.5 1"/>
<rect x="1425.50" y="978.00" width="11.50" height="11.50" fill="none" stroke="#f0f0f0" stroke-width="1.4" />
<rect x="1423.30" y="975.50" width="4.50" height="4.50" fill="#4a7fc6" stroke="#f0f0f0" stroke-width="1" />
<path d="M1446.50 980.80h6l-3.00 3.4z" fill="#d4d6d8" />
<path d="M1469.5 975.5l2.3 6.5 4.8 6-1.3 1.6-5.8-4.4-5.8 4.4-1.3-1.6 4.8-6z" fill="#f0f0f0" />
<circle cx="1476.50" cy="977.00" r="2.00" fill="none" stroke="#f0f0f0" stroke-width="1.1" />
<path d="M1493 975.5l2.3 6.5 4.8 6-1.3 1.6-5.8-4.4-5.8 4.4-1.3-1.6 4.8-6z" fill="#dcdedf" />
<path d="M1498 975l-1.8 3 2.5.3-2 3.2" fill="none" stroke="#dcdedf" stroke-width="1" />
<path d="M1516 975.5l2.3 6.5 4.8 6-1.3 1.6-5.8-4.4-5.8 4.4-1.3-1.6 4.8-6z" fill="#dcdedf" />
<text x="1531.50" y="987.00" font-size="11.5" fill="#dcdedf" textLength="12.00" lengthAdjust="spacingAndGlyphs" >1:1</text>
<path d="M1548.50 980.80h6l-3.00 3.4z" fill="#d4d6d8" />
<path d="M1579.85 980.81 L1579.85 983.79 L1577.63 984.41 L1577.62 984.44 L1578.75 986.44 L1576.64 988.55 L1574.64 987.42 L1574.61 987.43 L1573.99 989.65 L1571.01 989.65 L1570.39 987.43 L1570.36 987.42 L1568.36 988.55 L1566.25 986.44 L1567.38 984.44 L1567.37 984.41 L1565.15 983.79 L1565.15 980.81 L1567.37 980.19 L1567.38 980.16 L1566.25 978.16 L1568.36 976.05 L1570.36 977.18 L1570.39 977.17 L1571.01 974.95 L1573.99 974.95 L1574.61 977.17 L1574.64 977.18 L1576.64 976.05 L1578.75 978.16 L1577.62 980.16 L1577.63 980.19z" fill="#e8e8e8" />
<circle cx="1572.50" cy="982.30" r="2.48" fill="#3a4352" />
<path d="M1589.00 980.80h6l-3.00 3.4z" fill="#d4d6d8" />
<path d="M1611.5 974.5v15.5M1603.7 982.3h15.6" fill="none" stroke="#f0f0f0" stroke-width="1.6" />
<rect x="1629.30" y="976.00" width="6.80" height="6.80" fill="none" stroke="#dcdedf" stroke-width="1.2" />
<circle cx="1641.30" cy="981.30" r="2.70" fill="none" stroke="#dcdedf" stroke-width="1.2" />
<path d="M1635.3 985.5l2.8 4.3h-5.6z" fill="none" stroke="#dcdedf" stroke-width="1.1" />
<path d="M1655 979l5-2.5 6 2.5v7l-6 3-5-3z" fill="#3f76c0" />
<path d="M1655 979l5 2 6-2" fill="none" stroke="#8fc0f0" stroke-width="0.8" />
<path d="M1657 975v4M1655 977h6" fill="none" stroke="#8fc0f0" stroke-width="1" />
<rect x="1653.50" y="985.00" width="4.50" height="4.50" fill="#f0a030" />
<path d="M1660.5 987l2.5 2.8 5.5-6.5" fill="none" stroke="#3fc070" stroke-width="2" />
<rect x="1675.50" y="975.50" width="14.00" height="11.00" fill="#aeb4ba" />
<path d="M1676.5 985l4-5 3 3 2.5-2.5 3 4.5z" fill="#6a88b0" />
<path d="M1686 982.5l4.5 8h-9z" fill="#f0a848" />
<line x1="1686.00" y1="985.50" x2="1686.00" y2="988.30" stroke="#fff" stroke-width="1" />
<path d="M1700.5 980.5h10.5l5 4v6h-15.5z" fill="none" stroke="#e0a868" stroke-width="1.2" />
<rect x="1700.80" y="975.00" width="4.00" height="7.00" fill="none" rx="2" stroke="#e0a868" stroke-width="1.2" />
<path d="M1727 978.4l4 -2.4h7.5l-4 2.4z" fill="#c4c8cc" />
<path d="M1727 981.9l4 -2.4h7.5l-4 2.4z" fill="#c4c8cc" />
<path d="M1727 985.4l4 -2.4h7.5l-4 2.4z" fill="#c4c8cc" />
<path d="M1738 982l4.8 8.5h-9.6z" fill="#f0a848" />
<line x1="1738.00" y1="985.00" x2="1738.00" y2="988.30" stroke="#fff" stroke-width="1" />
<rect x="1754.50" y="976.00" width="14.00" height="11.50" fill="none" stroke="#dcdedf" stroke-width="1.4" />
<path d="M1757.5 984.5l3-3M1757.5 981.8v2.7h2.7M1762.5 981.5l3-3M1762.8 978.5h2.7v2.7" fill="none" stroke="#dcdedf" stroke-width="1" />
<rect x="1776.00" y="976.20" width="16.00" height="2.20" fill="#f0f0f0" />
<rect x="1776.00" y="981.70" width="16.00" height="2.20" fill="#f0f0f0" />
<rect x="1776.00" y="987.20" width="16.00" height="2.20" fill="#f0f0f0" />
<path d="M1745.5 652.5V173h22V652.5" fill="none" stroke="#2a313c" stroke-width="1" />
<rect x="1771.30" y="173.00" width="23.00" height="141.50" fill="none" stroke="#2a313c" stroke-width="1" />
<rect x="1748.50" y="177.00" width="1.00" height="1.00" fill="#b8bcc0" />
<rect x="1748.50" y="179.00" width="1.00" height="1.00" fill="#b8bcc0" />
<rect x="1750.50" y="177.00" width="1.00" height="1.00" fill="#b8bcc0" />
<rect x="1750.50" y="179.00" width="1.00" height="1.00" fill="#b8bcc0" />
<rect x="1752.50" y="177.00" width="1.00" height="1.00" fill="#b8bcc0" />
<rect x="1752.50" y="179.00" width="1.00" height="1.00" fill="#b8bcc0" />
<rect x="1754.50" y="177.00" width="1.00" height="1.00" fill="#b8bcc0" />
<rect x="1754.50" y="179.00" width="1.00" height="1.00" fill="#b8bcc0" />
<rect x="1756.50" y="177.00" width="1.00" height="1.00" fill="#b8bcc0" />
<rect x="1756.50" y="179.00" width="1.00" height="1.00" fill="#b8bcc0" />
<rect x="1758.50" y="177.00" width="1.00" height="1.00" fill="#b8bcc0" />
<rect x="1758.50" y="179.00" width="1.00" height="1.00" fill="#b8bcc0" />
<rect x="1760.50" y="177.00" width="1.00" height="1.00" fill="#b8bcc0" />
<rect x="1760.50" y="179.00" width="1.00" height="1.00" fill="#b8bcc0" />
<rect x="1774.50" y="177.00" width="1.00" height="1.00" fill="#b8bcc0" />
<rect x="1774.50" y="179.00" width="1.00" height="1.00" fill="#b8bcc0" />
<rect x="1776.50" y="177.00" width="1.00" height="1.00" fill="#b8bcc0" />
<rect x="1776.50" y="179.00" width="1.00" height="1.00" fill="#b8bcc0" />
<rect x="1778.50" y="177.00" width="1.00" height="1.00" fill="#b8bcc0" />
<rect x="1778.50" y="179.00" width="1.00" height="1.00" fill="#b8bcc0" />
<rect x="1780.50" y="177.00" width="1.00" height="1.00" fill="#b8bcc0" />
<rect x="1780.50" y="179.00" width="1.00" height="1.00" fill="#b8bcc0" />
<rect x="1782.50" y="177.00" width="1.00" height="1.00" fill="#b8bcc0" />
<rect x="1782.50" y="179.00" width="1.00" height="1.00" fill="#b8bcc0" />
<rect x="1784.50" y="177.00" width="1.00" height="1.00" fill="#b8bcc0" />
<rect x="1784.50" y="179.00" width="1.00" height="1.00" fill="#b8bcc0" />
<rect x="1786.50" y="177.00" width="1.00" height="1.00" fill="#b8bcc0" />
<rect x="1786.50" y="179.00" width="1.00" height="1.00" fill="#b8bcc0" />
<rect x="1748.00" y="205.50" width="17.50" height="1.80" fill="#d0d2d4" />
<rect x="1748.00" y="381.00" width="17.50" height="1.80" fill="#d0d2d4" />
<rect x="1748.00" y="450.20" width="17.50" height="1.80" fill="#d0d2d4" />
<rect x="1748.00" y="540.70" width="17.50" height="1.80" fill="#d0d2d4" />
<rect x="1748.00" y="610.20" width="17.50" height="1.80" fill="#d0d2d4" />
<rect x="1774.00" y="290.50" width="18.00" height="1.80" fill="#d0d2d4" />
<rect x="1749.00" y="185.50" width="11.00" height="11.00" fill="#f5922e" rx="1" />
<path d="M1751.5 188h6M1754.5 188v6M1752 191h5" fill="none" stroke="#ffe0c0" stroke-width="1" />
<path d="M1756.5 200v-8M1754 194.5l2.5-3 2.5 3" fill="none" stroke="#4d90e0" stroke-width="1.5" />
<path d="M1761.5 191.5v8M1759 197l2.5 3 2.5-3" fill="none" stroke="#2f6fc8" stroke-width="1.5" />
<path d="M1749.5 214h4.5l1 1.5h6v8h-11.5z" fill="#c8ccd0" />
<rect x="1757.50" y="219.00" width="6.50" height="9.00" fill="#eceeee" rx="0.8" />
<rect x="1758.70" y="220.30" width="4.00" height="2.50" fill="#5fb0f0" />
<path d="M1758.8 224.5h4M1758.8 226.5h4" fill="none" stroke="#555" stroke-width="0.8" />
<path d="M1750 234.5v13h13.5" fill="none" stroke="#d8dadc" stroke-width="1.2" />
<path d="M1750 247.5l12-12" fill="none" stroke="#d8dadc" stroke-width="1.1" />
<path d="M1750 232.5l1.8 3h-3.6zM1765 247.5l-3 1.8v-3.6zM1763 234l-1 3.3-2.3-2.3z" fill="#d8dadc" />
<path d="M1749 266l6.5-6 4.5 4.5-5.5 5.5c-2.5 1-5-1.5-5.5-4z" fill="#8a5430" />
<path d="M1756 259.5l2.3-2.3 4.5 4.5-2.3 2.3z" fill="#d8dadc" />
<path d="M1760 257.5l3.5-3.5 1.5 1.5-3.5 3.5z" fill="#c89058" />
<circle cx="1753.50" cy="283.00" r="3.60" fill="#c4c8cc" />
<circle cx="1757.50" cy="281.00" r="3.80" fill="#c4c8cc" />
<circle cx="1756.00" cy="287.00" r="3.80" fill="#c4c8cc" />
<circle cx="1760.50" cy="285.50" r="3.30" fill="#c4c8cc" />
<path d="M1757 282h7M1756 286h8M1762 280l2.5 2-2.5 2" fill="none" stroke="#5fa0e8" stroke-width="1" />
<path d="M1764.5 292.5v-3.2l-3.2 3.2z" fill="#e8e8e8" />
<rect x="1749.50" y="298.50" width="9.00" height="8.50" fill="none" stroke="#d8dadc" stroke-width="1.2" />
<circle cx="1758.50" cy="307.00" r="4.80" fill="none" stroke="#d8dadc" stroke-width="1.2" />
<path d="M1764.5 314v-3.2l-3.2 3.2z" fill="#e8e8e8" />
<path d="M1750 334l10-10" fill="none" stroke="#d0a068" stroke-width="2" />
<path d="M1750.5 322l11 11" fill="none" stroke="#d8dadc" stroke-width="1.8" />
<path d="M1757 320.5c2.5-.8 5 0 6.5 2l-2 2c-1-1.2-2.5-1.6-4-1.2z" fill="#d8dadc" />
<path d="M1749.5 320.5l3 .5-.8 2.3-2.5-1z" fill="#d8dadc" />
<path d="M1759.5 331.5h5v4h-5z" fill="#4d90e0" />
<path d="M1764.5 336v-3.2l-3.2 3.2z" fill="#e8e8e8" />
<path d="M1749.5 346l6-3.5h8.5v8l-6 4h-8.5z" fill="#4d8ad8" />
<path d="M1749.5 346h8.5l6-3.5M1758 346v8.5" fill="none" stroke="#a8ccf4" stroke-width="0.9" />
<rect x="1751.50" y="348.50" width="4.50" height="3.50" fill="#dfe8f4" />
<path d="M1764.5 357.5v-3.2l-3.2 3.2z" fill="#e8e8e8" />
<path d="M1749.5 374c0-6 3-9.5 7-9.5s7 3 7.5 8l1 2.5h-16z" fill="#f6c040" />
<path d="M1752 373c.5-4 2-6.5 4.5-7M1757 365v8" fill="none" stroke="#c88a20" stroke-width="1" />
<path d="M1764.5 379v-3.2l-3.2 3.2z" fill="#e8e8e8" />
<circle cx="1755.80" cy="395.40" r="7.00" fill="#d0d4d6" />
<path d="M1764.5 403.5v-3.2l-3.2 3.2z" fill="#e8e8e8" />
<path d="M1749.5 409.5h7l3.5 3.5v11h-10.5z" fill="none" stroke="#d0d4d6" stroke-width="1.1" />
<path d="M1756.5 413l5.5 10.5h-11z" fill="#e08a48" />
<path d="M1753.5 420l6 0M1755 417l3.5 5" fill="none" stroke="#6fb070" stroke-width="0.8" />
<path d="M1764.5 424.5v-3.2l-3.2 3.2z" fill="#e8e8e8" />
<path d="M1749.5 434.5l6-3 7.5 3v7l-6.5 3.5-7-3.5z" fill="#eceeee" />
<path d="M1752 431v3M1755 429.5v4M1758 430.5v3.5" fill="none" stroke="#7fb8f0" stroke-width="1" />
<path d="M1764.5 445.5v-3.2l-3.2 3.2z" fill="#e8e8e8" />
<path d="M1751 470.5h2.5v-9a2.8 2.8 0 0 1 5.6 0v9h2.5" fill="none" stroke="#eceeee" stroke-width="1.4" />
<path d="M1764.5 472.5v-3.2l-3.2 3.2z" fill="#e8e8e8" />
<path d="M1749.5 481.5h13M1749.5 488h13M1752.5 479v12M1756 478v14M1759.5 479v12" fill="none" stroke="#d8dadc" stroke-width="1.1" />
<path d="M1764.5 493.5v-3.2l-3.2 3.2z" fill="#e8e8e8" />
<path d="M1749 507h5M1758 507h5.5M1754 501.5v11M1758 501.5v11" fill="none" stroke="#d8dadc" stroke-width="1.3" />
<path d="M1764.5 514.5v-3.2l-3.2 3.2z" fill="#e8e8e8" />
<path d="M1749.5 527h13.5M1753.5 524.5v5M1756.3 524.5v5M1759 524.5v5" fill="none" stroke="#eceeee" stroke-width="1.1" />
<path d="M1748.5 527l3-2v4zM1764 527l-3-2v4z" fill="#eceeee" />
<path d="M1750.5 563v-14.5h4c3 0 6 2 8 5" fill="none" stroke="#d8dadc" stroke-width="1.2" />
<path d="M1756 553l5-1.5-1.5 3.5" fill="none" stroke="#7fb8f0" stroke-width="1" />
<path d="M1764.5 563.5v-3.2l-3.2 3.2z" fill="#e8e8e8" />
<path d="M1750.5 584v-14.5l12 7.5" fill="none" stroke="#d8dadc" stroke-width="1.2" />
<path d="M1750.5 577.5h12M1753 577.5v3h3.5v-3M1758.5 577.5v3h3" fill="none" stroke="#6fa8e8" stroke-width="1" />
<path d="M1764.5 584.5v-3.2l-3.2 3.2z" fill="#e8e8e8" />
<path d="M1750 589v14.5M1762.5 589v14.5" fill="none" stroke="#d8dadc" stroke-width="1.2" />
<path d="M1750 594.5h12.5M1750 598h12.5M1753 592.5v8M1756.3 592.5v8M1759.5 592.5v8" fill="none" stroke="#6fa8e8" stroke-width="1" />
<path d="M1764.5 605.5v-3.2l-3.2 3.2z" fill="#e8e8e8" />
<path d="M1750.5 632v-13l11 9.5h-11" fill="none" stroke="#d8dadc" stroke-width="1.2" />
<path d="M1757 615.5v8M1755 618l2-2.5 2 2.5" fill="none" stroke="#6fa8e8" stroke-width="1.1" />
<path d="M1753 628.5v3.5h4M1759 629v3" fill="none" stroke="#d8dadc" stroke-width="1" />
<path d="M1764.5 633.5v-3.2l-3.2 3.2z" fill="#e8e8e8" />
<path d="M1750 652.5v-13.5l6.3 6 6.3-6v13.5" fill="none" stroke="#eceeee" stroke-width="1.4" />
<rect x="1775.00" y="185.50" width="11.50" height="11.50" fill="#f5922e" rx="1" />
<text x="1780.80" y="194.00" font-size="5.6" fill="#ffe8d0" text-anchor="middle" font-weight="bold" >IFC</text>
<path d="M1783 200v-8M1780.5 194.5l2.5-3 2.5 3" fill="none" stroke="#4d90e0" stroke-width="1.5" />
<path d="M1788 191.5v8M1785.5 197l2.5 3 2.5-3" fill="none" stroke="#2f6fc8" stroke-width="1.5" />
<rect x="1775.00" y="208.00" width="10.50" height="8.00" fill="#e8eaea" />
<path d="M1776 210h8.5M1776 212.5h8.5M1776 215h6" fill="none" stroke="#555" stroke-width="0.8" />
<path d="M1784 211.5h6M1788 209l2.5 2.5-2.5 2.5" fill="none" stroke="#5fa0e8" stroke-width="1.4" />
<rect x="1775.00" y="217.00" width="10.50" height="5.50" fill="#2f6b48" />
<text x="1780.30" y="221.60" font-size="4.6" fill="#e0f0e0" text-anchor="middle" font-weight="bold" >IFC</text>
<rect x="1775.50" y="228.50" width="11.00" height="11.00" fill="#6a717e" stroke="#c8ccd0" stroke-width="1.1" />
<path d="M1787.5 236v7M1784 239.5h7" fill="none" stroke="#5fa0e8" stroke-width="2" />
<path d="M1775 252l8-3 8 9.5-8 6z" fill="#e8eaea" />
<circle cx="1778.50" cy="253.50" r="1.20" fill="#3b4453" />
<path d="M1781 259l3.5-3.5M1782.5 261l3.5-3.5" fill="none" stroke="#9098a0" stroke-width="0.7" />
<path d="M1783.5 256l5.5-5.5 1.8 1.8-5.5 5.5z" fill="#d0a060" />
<path d="M1789 250.5l1-1 1.8 1.8-1 1z" fill="#e8702a" />
<path d="M1787.27 275.23 L1787.27 277.77 L1785.38 278.30 L1785.37 278.32 L1786.33 280.04 L1784.54 281.83 L1782.82 280.87 L1782.80 280.88 L1782.27 282.77 L1779.73 282.77 L1779.20 280.88 L1779.18 280.87 L1777.46 281.83 L1775.67 280.04 L1776.63 278.32 L1776.62 278.30 L1774.73 277.77 L1774.73 275.23 L1776.62 274.70 L1776.63 274.68 L1775.67 272.96 L1777.46 271.17 L1779.18 272.13 L1779.20 272.12 L1779.73 270.23 L1782.27 270.23 L1782.80 272.12 L1782.82 272.13 L1784.54 271.17 L1786.33 272.96 L1785.37 274.68 L1785.38 274.70z" fill="#d8dadc" />
<circle cx="1781.00" cy="276.50" r="2.11" fill="#3b4453" />
<rect x="1783.00" y="278.00" width="8.50" height="8.00" fill="#eceeee" />
<rect x="1784.50" y="278.00" width="5.00" height="2.80" fill="#6a717e" />
<rect x="1784.50" y="282.50" width="5.50" height="3.50" fill="#6a717e" />
<rect x="1776.00" y="298.00" width="13.00" height="14.00" fill="#eceeee" rx="0.8" />
<rect x="1777.50" y="299.50" width="5.00" height="4.00" fill="#4d90e0" />
<path d="M1784 300h3.5M1784 302.5h3.5M1777.5 306h10M1777.5 309h10M1781 305v5.5M1785 305v5.5" fill="none" stroke="#555d68" stroke-width="0.9" />
</svg>
</body></html>
